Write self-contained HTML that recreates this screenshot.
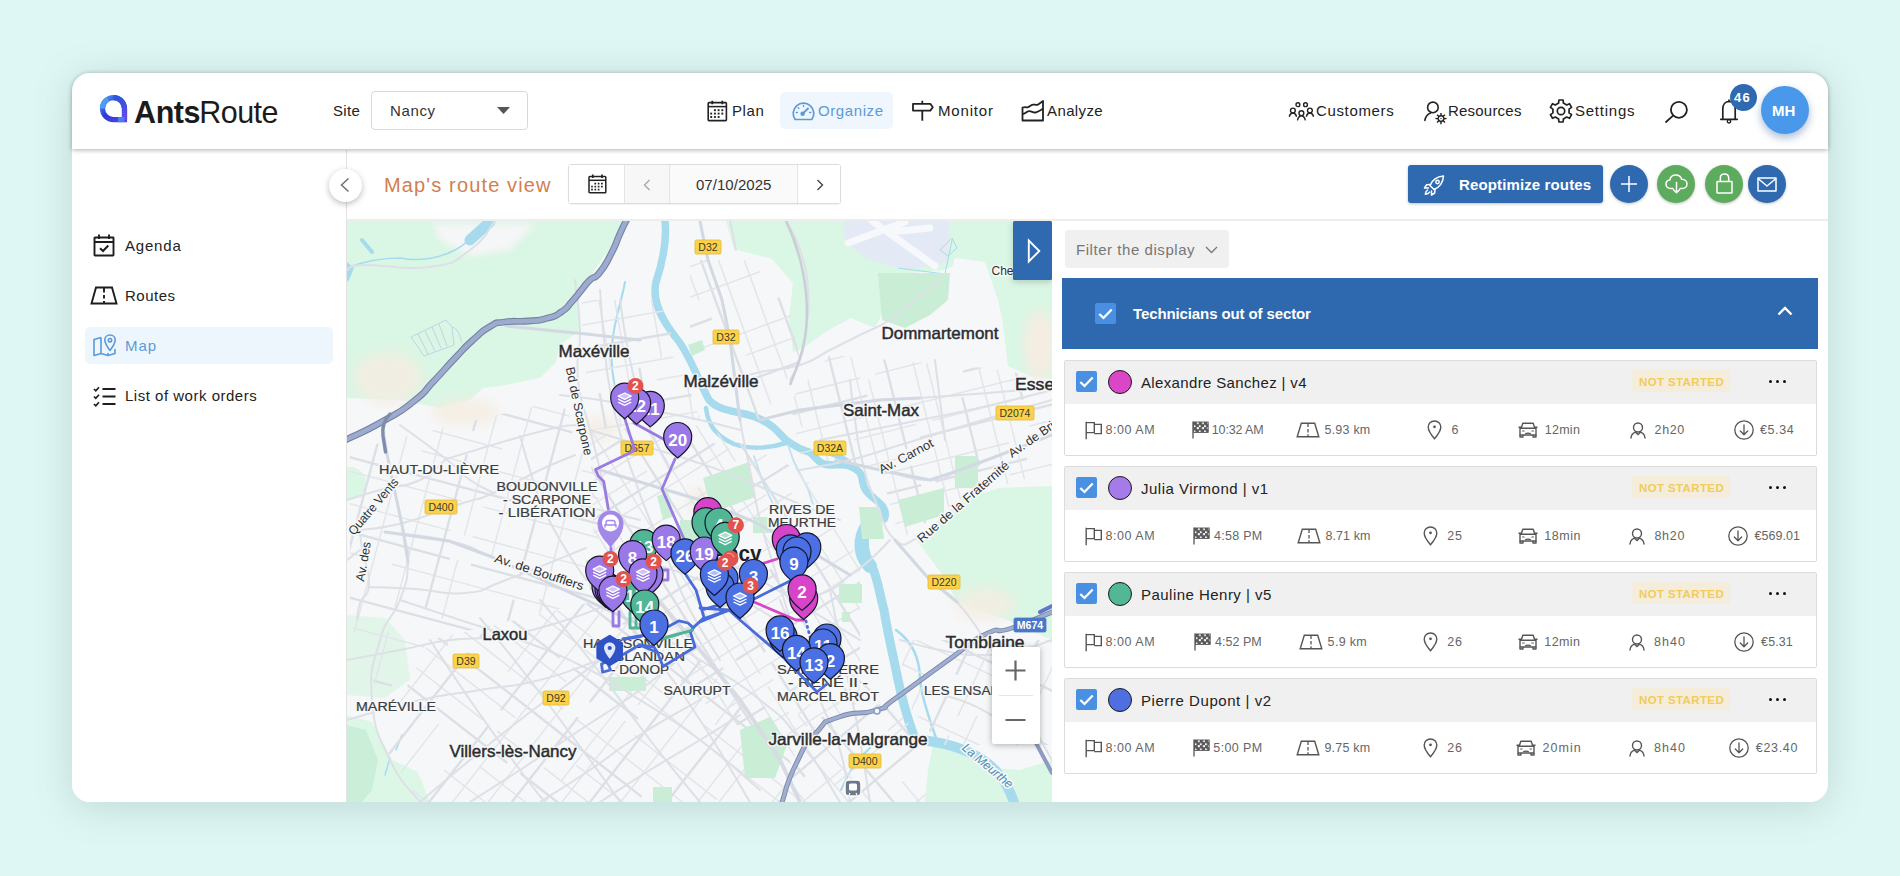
<!DOCTYPE html>
<html lang="en">
<head>
<meta charset="utf-8">
<title>AntsRoute - Map's route view</title>
<style>
*{box-sizing:border-box;margin:0;padding:0}
html,body{width:1900px;height:876px;overflow:hidden}
body{background:#dff7f4;font-family:"Liberation Sans",sans-serif;color:#222;position:relative}
.abs{position:absolute}
.t{position:absolute;white-space:nowrap;line-height:1}
#card{position:absolute;left:72px;top:73px;width:1756px;height:729px;background:#fff;border-radius:18px;box-shadow:0 5px 40px rgba(60,100,95,.2)}
#hdr{position:absolute;left:72px;top:73px;width:1756px;height:76px;background:#fff;border-radius:18px 18px 0 0;box-shadow:0 1px 5px rgba(0,0,0,.32)}
#side{position:absolute;left:72px;top:150px;width:275px;height:652px;border-right:1px solid #e2e2e2;background:#fff;border-radius:0 0 0 18px}
#subline{position:absolute;left:347px;top:219px;width:1481px;height:2px;background:#ededed}
svg{position:absolute;overflow:visible}
#map{position:absolute;left:346px;top:221px;width:706px;height:581px;overflow:hidden;background:#f6f7f8}
#map svg{left:0;top:0}
</style>
</head>
<body>
<div id="card"></div>
<div id="map"><svg width="706" height="581" viewBox="346 221 706 581" font-family="Liberation Sans, sans-serif">
<defs>
<filter id="blur6" x="-20%" y="-20%" width="140%" height="140%"><feGaussianBlur stdDeviation="6"/></filter>
<filter id="blur3" x="-20%" y="-20%" width="140%" height="140%"><feGaussianBlur stdDeviation="3"/></filter>
</defs>
<rect x="346" y="221" width="706" height="581" fill="#f6f7f8"/>
<g fill="#daf6e4">
<path d="M346 221H628L612 245L600 262L588 280L578 296L580 330L560 345L556 362L540 378L506 385L483 388L470 400L440 408L420 404L400 400L346 398Z"/>
<path d="M726 221L734 249L772 259L793 283L789 318L793 352L803 348L827 331L851 318L875 328L882 314L899 300L909 273L943 270L960 263L984 273L998 300L1005 331L1008 366L1032 376L1052 379V221Z"/>
<path d="M916 539L962 500L999 488L1052 486V640L1010 621L957 602L944 577Z"/>
<path d="M933 745L965 752L990 768L1020 770L1052 760V802H925L928 770Z"/>
<path d="M1010 600H1052V628L1012 612Z"/>
<path d="M346 615L385 618L405 640L410 680L385 698L346 695Z" fill-opacity=".75"/><path d="M346 715L372 722L392 760L418 772L430 802H346Z" fill-opacity=".9"/>
<circle cx="350" cy="483" r="16"/>
<path d="M346 725L366 730L378 760L372 790L362 802H346Z" fill="#caeed8"/>
</g>
<g fill="#f5ede2" fill-opacity=".85" filter="url(#blur6)"><ellipse cx="388" cy="378" rx="34" ry="26"/><ellipse cx="465" cy="412" rx="34" ry="13"/><ellipse cx="1035" cy="345" rx="22" ry="36"/><ellipse cx="985" cy="604" rx="30" ry="16"/><ellipse cx="600" cy="428" rx="20" ry="10"/><ellipse cx="700" cy="500" rx="14" ry="12"/></g>
<g fill="#f5f6f7" filter="url(#blur3)"><path d="M433 224H535L510 250L470 256L440 240Z"/><path d="M955 262L990 262L1005 300L1010 366L960 376L905 352L870 340L900 310L925 300Z" fill-opacity=".0"/></g>
<path d="M955 258L985 262L998 300L1008 366L1040 382L1052 384V420H820V355L803 350L827 333L851 320L875 330L890 318L920 296L948 282Z" fill="#f6f7f8"/>
<path d="M1000 300L1052 290V376L1032 376L1008 366Z" fill="#daf6e4"/>
<ellipse cx="1040" cy="345" rx="16" ry="34" fill="#f5ede2" filter="url(#blur6)"/>
<path d="M843 221H950L948 262L905 270L865 258L845 240Z" fill="#e3eaf6"/>
<g stroke="#f6f8fc" stroke-width="7" stroke-linecap="round"><path d="M848 243L905 222M872 221L935 266M890 232L930 228"/></g>
<path d="M898 268L945 274L952 240M940 250L952 238L957 248L948 256Z" fill="none" stroke="#a6dbed" stroke-width="1"/>
<g fill="none" stroke="#c3d3e6" stroke-width="1"><path d="M411 337L446 320L452 327L454 345L424 356Z"/><path d="M418 334L428 354M425 331L435 351M432 327L441 348M439 324L447 346"/><path d="M452 327C458 328 460 336 462 343"/></g>
<g fill="none" stroke="#a6dbed" stroke-linecap="round" stroke-linejoin="round">
<path d="M665 221C667 240 664 258 656 282C652 300 660 318 677 339C690 355 698 380 709 400C716 408 727 410 740 413C752 415 764 420 773 427C780 433 783 438 788 441.500C796 447 802 450 809 452C815 456 818 462 823.600 464C832 466 838 464 846 465C853 467 858 470 860.700 474C863 479 862 484 865 489C870 497 878 500 883 507C886 512 886 515 884.400 518.700" stroke-width="7.500"/>
<path d="M706 408C708 425 716 436 734 444C748 449 768 449 786 443" stroke-width="4.500"/><path d="M754 456L762 480L773 504M788 445L794 462L808 489L813 504" stroke-width="1.800" stroke="#bfe2ee"/>
<path d="M816 452C826 450 838 455 848 462" stroke-width="6"/>
<path d="M870 520C862 535 862 552 872 566C878 580 880 596 884 610C887 630 893 655 897 675C902 700 908 720 914 736" stroke-width="9"/>
<path d="M868 525C858 540 860 556 870 566" stroke-width="14"/>
<path d="M920 740C940 742 960 746 980 758C996 768 1006 780 1014 802" stroke-width="10"/>
<path d="M896 630C910 640 920 655 920 680C922 700 930 720 936 738" stroke-width="2.500"/>
<path d="M625 282C622 300 614 320 612 345C610 365 614 385 618 400" stroke-width="2"/>
<path d="M347 268C362 262 380 258 400 258C420 262 440 258 455 250C465 245 472 238 480 228" stroke-width="1.500"/>
<path d="M362 240L372 252" stroke-width="4"/>
<path d="M470 240L490 222" stroke-width="11"/>
<path d="M841 790C850 770 856 760 870 748" stroke-width="2"/>
<path d="M390 758L385 775M402 735L396 750" stroke-width="1.500"/>
</g>
<path d="M347 262L354 268L349 280L347 282Z" fill="#a6dbed"/>
<clipPath id="gA"><path d="M590 430L700 425L800 470L860 560L860 700L790 760L700 700L640 640L596 600Z"/></clipPath>
<g clip-path="url(#gA)" fill="none" stroke="#e3e5ea" stroke-width="1.5" stroke-linecap="round">
<path d="M797.7 281.6L826.9 328.3" stroke-width="2.400" stroke="#dcdfe5"/>
<path d="M826.9 328.3L891.6 431.9" stroke-width="2.400" stroke="#dcdfe5"/>
<path d="M891.6 431.9L961.1 542.9" stroke-width="2.400" stroke="#dcdfe5"/>
<path d="M961.1 542.9L1005.2 613.6" stroke-width="2.400" stroke="#dcdfe5"/>
<path d="M1005.2 613.6L1036.3 663.4" stroke-width="2.400" stroke="#dcdfe5"/>
<path d="M780.2 292.5L832.3 375.9"/>
<path d="M840.2 388.6L864.1 426.8"/>
<path d="M864.1 426.8L900.6 485.2"/>
<path d="M900.6 485.2L952.0 567.6"/>
<path d="M952.0 567.6L978.7 610.2"/>
<path d="M978.7 610.2L1018.8 674.4"/>
<path d="M766.9 300.9L814.4 376.9"/>
<path d="M860.2 450.3L897.3 509.6"/>
<path d="M897.3 509.6L922.8 550.5"/>
<path d="M930.8 563.2L998.4 671.4"/>
<path d="M998.4 671.4L1005.5 682.7"/>
<path d="M757.5 306.7L828.1 419.8" stroke-width="2.400" stroke="#dcdfe5"/>
<path d="M828.1 419.8L889.9 518.6" stroke-width="2.400" stroke="#dcdfe5"/>
<path d="M889.9 518.6L929.1 581.3" stroke-width="2.400" stroke="#dcdfe5"/>
<path d="M937.0 594.0L989.0 677.1" stroke-width="2.400" stroke="#dcdfe5"/>
<path d="M989.0 677.1L996.1 688.6" stroke-width="2.400" stroke="#dcdfe5"/>
<path d="M808.1 416.3L844.4 474.3"/>
<path d="M844.4 474.3L866.8 510.1"/>
<path d="M866.8 510.1L920.4 595.9"/>
<path d="M920.4 595.9L982.3 694.9"/>
<path d="M793.9 413.6L860.9 520.8"/>
<path d="M868.8 533.5L942.3 651.1"/>
<path d="M950.3 663.8L974.3 702.2"/>
<path d="M745.1 363.1L780.2 419.3" stroke-width="2.400" stroke="#dcdfe5"/>
<path d="M788.2 432.0L837.7 511.2" stroke-width="2.400" stroke="#dcdfe5"/>
<path d="M837.7 511.2L909.4 626.0" stroke-width="2.400" stroke="#dcdfe5"/>
<path d="M712.5 334.8L759.2 409.6"/>
<path d="M759.2 409.6L784.0 449.2"/>
<path d="M784.0 449.2L811.0 492.5"/>
<path d="M811.0 492.5L832.2 526.4"/>
<path d="M832.2 526.4L903.7 640.8"/>
<path d="M903.7 640.8L951.1 716.7"/>
<path d="M695.1 345.7L748.2 430.7"/>
<path d="M822.4 549.3L869.0 624.0"/>
<path d="M869.0 624.0L895.6 666.6"/>
<path d="M895.6 666.6L933.7 727.5"/>
<path d="M683.8 352.8L724.2 417.4" stroke-width="2.400" stroke="#dcdfe5"/>
<path d="M724.2 417.4L785.5 515.6" stroke-width="2.400" stroke="#dcdfe5"/>
<path d="M785.5 515.6L843.6 608.6" stroke-width="2.400" stroke="#dcdfe5"/>
<path d="M843.6 608.6L913.0 719.5" stroke-width="2.400" stroke="#dcdfe5"/>
<path d="M913.0 719.5L922.4 734.6" stroke-width="2.400" stroke="#dcdfe5"/>
<path d="M672.1 360.1L735.1 460.8"/>
<path d="M799.0 563.1L830.8 614.0"/>
<path d="M830.8 614.0L904.4 731.8"/>
<path d="M660.0 367.7L731.9 482.7"/>
<path d="M731.9 482.7L803.7 597.6"/>
<path d="M803.7 597.6L830.3 640.2"/>
<path d="M830.3 640.2L862.3 691.5"/>
<path d="M862.3 691.5L898.6 749.5"/>
<path d="M648.7 374.7L690.4 441.6" stroke-width="2.400" stroke="#dcdfe5"/>
<path d="M690.4 441.6L737.0 516.1" stroke-width="2.400" stroke="#dcdfe5"/>
<path d="M770.7 570.1L816.5 643.3" stroke-width="2.400" stroke="#dcdfe5"/>
<path d="M816.5 643.3L876.1 738.7" stroke-width="2.400" stroke="#dcdfe5"/>
<path d="M876.1 738.7L887.3 756.6" stroke-width="2.400" stroke="#dcdfe5"/>
<path d="M698.7 488.1L728.2 535.2"/>
<path d="M807.2 661.7L872.3 765.9"/>
<path d="M622.9 390.8L670.7 467.2"/>
<path d="M670.7 467.2L705.6 523.1"/>
<path d="M705.6 523.1L730.1 562.2"/>
<path d="M607.7 400.3L629.9 435.8" stroke-width="2.400" stroke="#dcdfe5"/>
<path d="M629.9 435.8L683.4 521.3" stroke-width="2.400" stroke="#dcdfe5"/>
<path d="M683.4 521.3L713.7 569.9" stroke-width="2.400" stroke="#dcdfe5"/>
<path d="M713.7 569.9L764.4 651.0" stroke-width="2.400" stroke="#dcdfe5"/>
<path d="M772.3 663.7L835.1 764.1" stroke-width="2.400" stroke="#dcdfe5"/>
<path d="M835.1 764.1L846.3 782.1" stroke-width="2.400" stroke="#dcdfe5"/>
<path d="M702.3 581.3L760.2 673.9"/>
<path d="M768.1 686.6L816.2 763.6"/>
<path d="M582.1 416.3L609.8 460.5"/>
<path d="M609.8 460.5L666.5 551.4"/>
<path d="M666.5 551.4L723.2 642.1"/>
<path d="M723.2 642.1L794.2 755.7"/>
<path d="M565.5 426.7L607.8 494.4" stroke-width="2.400" stroke="#dcdfe5"/>
<path d="M607.8 494.4L637.6 542.0" stroke-width="2.400" stroke="#dcdfe5"/>
<path d="M645.5 554.7L684.7 617.4" stroke-width="2.400" stroke="#dcdfe5"/>
<path d="M684.7 617.4L710.8 659.1" stroke-width="2.400" stroke="#dcdfe5"/>
<path d="M710.8 659.1L761.3 740.1" stroke-width="2.400" stroke="#dcdfe5"/>
<path d="M761.3 740.1L802.9 806.6" stroke-width="2.400" stroke="#dcdfe5"/>
<path d="M802.9 806.6L804.1 808.5" stroke-width="2.400" stroke="#dcdfe5"/>
<path d="M555.2 433.2L590.4 489.6"/>
<path d="M590.4 489.6L626.0 546.5"/>
<path d="M633.9 559.2L700.1 665.1"/>
<path d="M700.1 665.1L742.8 733.5"/>
<path d="M750.8 746.2L793.8 815.0"/>
<path d="M539.9 442.7L608.5 552.5"/>
<path d="M663.4 640.3L716.8 725.8"/>
<path d="M716.8 725.8L778.5 824.5"/>
<path d="M522.5 453.5L592.3 565.1" stroke-width="2.400" stroke="#dcdfe5"/>
<path d="M592.3 565.1L641.4 643.7" stroke-width="2.400" stroke="#dcdfe5"/>
<path d="M641.4 643.7L713.9 759.8" stroke-width="2.400" stroke="#dcdfe5"/>
<path d="M713.9 759.8L745.8 810.8" stroke-width="2.400" stroke="#dcdfe5"/>
<path d="M745.8 810.8L761.2 835.4" stroke-width="2.400" stroke="#dcdfe5"/>
<path d="M511.0 460.7L550.6 524.1"/>
<path d="M550.6 524.1L573.8 561.1"/>
<path d="M573.8 561.1L622.2 638.7"/>
<path d="M664.9 707.0L720.9 796.6"/>
<path d="M728.9 809.4L749.6 842.6"/>
<path d="M494.2 471.3L559.5 575.8"/>
<path d="M559.5 575.8L602.1 644.0"/>
<path d="M602.1 644.0L667.7 748.9"/>
<path d="M667.7 748.9L711.7 819.4"/>
<path d="M719.7 832.1L732.8 853.1"/>
<path d="M478.4 481.2L502.0 518.9" stroke-width="2.400" stroke="#dcdfe5"/>
<path d="M502.0 518.9L546.8 590.6" stroke-width="2.400" stroke="#dcdfe5"/>
<path d="M546.8 590.6L619.5 707.0" stroke-width="2.400" stroke="#dcdfe5"/>
<path d="M642.5 743.9L682.6 808.0" stroke-width="2.400" stroke="#dcdfe5"/>
<path d="M690.6 820.8L716.2 861.8" stroke-width="2.400" stroke="#dcdfe5"/>
<path d="M716.2 861.8L717.0 863.0" stroke-width="2.400" stroke="#dcdfe5"/>
<path d="M470.5 486.1L512.9 553.9"/>
<path d="M512.9 553.9L549.9 613.2"/>
<path d="M549.9 613.2L602.2 696.8"/>
<path d="M602.2 696.8L658.2 786.5"/>
<path d="M666.2 799.2L709.1 867.9"/>
<path d="M455.4 495.5L510.7 583.9"/>
<path d="M578.8 692.8L648.2 803.9"/>
<path d="M648.2 803.9L694.0 877.3"/>
<path d="M512.0 600.1L577.5 704.9" stroke-width="2.400" stroke="#dcdfe5"/>
<path d="M577.5 704.9L631.9 791.9" stroke-width="2.400" stroke="#dcdfe5"/>
<path d="M639.8 804.7L675.0 860.9" stroke-width="2.400" stroke="#dcdfe5"/>
<path d="M675.0 860.9L687.7 881.3" stroke-width="2.400" stroke="#dcdfe5"/>
<path d="M435.0 508.2L495.2 604.6"/>
<path d="M495.2 604.6L561.3 710.3"/>
<path d="M561.3 710.3L594.7 763.8"/>
<path d="M602.7 776.5L650.0 852.3"/>
<path d="M658.0 865.1L673.6 890.1"/>
<path d="M417.6 519.1L442.9 559.6"/>
<path d="M442.9 559.6L498.7 648.8"/>
<path d="M498.7 648.8L520.5 683.7"/>
<path d="M520.5 683.7L593.2 800.1"/>
<path d="M593.2 800.1L650.2 891.4"/>
<path d="M650.2 891.4L656.2 900.9"/>
<path d="M1035.0 663.8L974.6 701.5" stroke-width="2.400" stroke="#dcdfe5"/>
<path d="M960.2 710.5L924.8 732.6" stroke-width="2.400" stroke="#dcdfe5"/>
<path d="M910.4 741.6L792.2 815.5" stroke-width="2.400" stroke="#dcdfe5"/>
<path d="M792.2 815.5L751.9 840.6" stroke-width="2.400" stroke="#dcdfe5"/>
<path d="M751.9 840.6L653.2 902.4" stroke-width="2.400" stroke="#dcdfe5"/>
<path d="M955.5 687.8L888.2 729.9"/>
<path d="M873.8 738.9L782.1 796.2"/>
<path d="M782.1 796.2L712.8 839.5"/>
<path d="M712.8 839.5L641.7 884.0"/>
<path d="M1015.5 632.6L903.0 702.9"/>
<path d="M903.0 702.9L847.6 737.5"/>
<path d="M833.2 746.5L714.6 820.6"/>
<path d="M714.6 820.6L633.7 871.2"/>
<path d="M1007.5 619.7L917.4 676.0" stroke-width="2.400" stroke="#dcdfe5"/>
<path d="M917.4 676.0L862.4 710.4" stroke-width="2.400" stroke="#dcdfe5"/>
<path d="M862.4 710.4L812.3 741.7" stroke-width="2.400" stroke="#dcdfe5"/>
<path d="M997.4 603.5L901.3 663.6"/>
<path d="M901.3 663.6L812.8 718.9"/>
<path d="M812.8 718.9L701.5 788.4"/>
<path d="M701.5 788.4L627.5 834.6"/>
<path d="M627.5 834.6L615.5 842.2"/>
<path d="M987.7 588.0L912.8 634.8"/>
<path d="M912.8 634.8L864.7 664.9"/>
<path d="M788.3 712.6L715.9 757.8"/>
<path d="M701.5 766.8L631.4 810.7"/>
<path d="M631.4 810.7L605.8 826.6"/>
<path d="M978.6 573.5L876.0 637.6" stroke-width="2.400" stroke="#dcdfe5"/>
<path d="M876.0 637.6L778.5 698.5" stroke-width="2.400" stroke="#dcdfe5"/>
<path d="M764.1 707.5L666.9 768.2" stroke-width="2.400" stroke="#dcdfe5"/>
<path d="M666.9 768.2L604.3 807.3" stroke-width="2.400" stroke="#dcdfe5"/>
<path d="M604.3 807.3L596.7 812.1" stroke-width="2.400" stroke="#dcdfe5"/>
<path d="M968.6 557.5L902.1 599.1"/>
<path d="M772.8 679.9L728.1 707.8"/>
<path d="M713.7 716.8L597.7 789.3"/>
<path d="M960.4 544.4L917.2 571.3"/>
<path d="M917.2 571.3L803.5 642.4"/>
<path d="M789.0 651.4L747.9 677.1"/>
<path d="M747.9 677.1L647.6 739.8"/>
<path d="M647.6 739.8L578.5 783.0"/>
<path d="M949.4 526.8L878.4 571.1" stroke-width="2.400" stroke="#dcdfe5"/>
<path d="M878.4 571.1L838.5 596.1" stroke-width="2.400" stroke="#dcdfe5"/>
<path d="M838.5 596.1L771.6 637.8" stroke-width="2.400" stroke="#dcdfe5"/>
<path d="M771.6 637.8L736.8 659.6" stroke-width="2.400" stroke="#dcdfe5"/>
<path d="M722.4 668.6L664.9 704.5" stroke-width="2.400" stroke="#dcdfe5"/>
<path d="M664.9 704.5L590.6 750.9" stroke-width="2.400" stroke="#dcdfe5"/>
<path d="M590.6 750.9L567.5 765.4" stroke-width="2.400" stroke="#dcdfe5"/>
<path d="M943.5 517.3L834.5 585.4"/>
<path d="M834.5 585.4L778.8 620.2"/>
<path d="M778.8 620.2L725.6 653.4"/>
<path d="M725.6 653.4L630.8 712.7"/>
<path d="M616.3 721.7L565.6 753.4"/>
<path d="M933.1 500.8L859.8 546.6"/>
<path d="M859.8 546.6L816.6 573.6"/>
<path d="M816.6 573.6L706.7 642.3"/>
<path d="M706.7 642.3L592.3 713.8"/>
<path d="M577.9 722.8L551.3 739.4"/>
<path d="M921.9 482.8L872.4 513.8" stroke-width="2.400" stroke="#dcdfe5"/>
<path d="M776.3 573.8L714.5 612.4" stroke-width="2.400" stroke="#dcdfe5"/>
<path d="M700.1 621.4L663.5 644.3" stroke-width="2.400" stroke="#dcdfe5"/>
<path d="M917.2 475.3L859.6 511.3"/>
<path d="M859.6 511.3L778.1 562.2"/>
<path d="M685.1 620.4L643.7 646.2"/>
<path d="M578.2 687.1L535.4 713.9"/>
<path d="M908.1 460.6L805.3 524.8"/>
<path d="M805.3 524.8L739.5 565.9"/>
<path d="M739.5 565.9L683.8 600.7"/>
<path d="M683.8 600.7L619.1 641.2"/>
<path d="M619.1 641.2L562.9 676.3"/>
<path d="M562.9 676.3L526.2 699.2"/>
<path d="M697.6 577.6L652.4 605.9" stroke-width="2.400" stroke="#dcdfe5"/>
<path d="M652.4 605.9L550.4 669.6" stroke-width="2.400" stroke="#dcdfe5"/>
<path d="M550.4 669.6L519.7 688.8" stroke-width="2.400" stroke="#dcdfe5"/>
<path d="M890.0 431.7L805.6 484.5"/>
<path d="M791.1 493.5L693.4 554.6"/>
<path d="M693.4 554.6L604.4 610.2"/>
<path d="M604.4 610.2L556.8 639.9"/>
<path d="M556.8 639.9L508.2 670.3"/>
<path d="M765.8 495.0L712.1 528.6"/>
<path d="M614.7 589.5L514.6 652.0"/>
<path d="M514.6 652.0L501.7 660.0"/>
<path d="M876.3 409.9L821.6 444.1" stroke-width="2.400" stroke="#dcdfe5"/>
<path d="M821.6 444.1L760.0 482.6" stroke-width="2.400" stroke="#dcdfe5"/>
<path d="M760.0 482.6L683.1 530.6" stroke-width="2.400" stroke="#dcdfe5"/>
<path d="M865.7 392.7L827.5 416.6"/>
<path d="M827.5 416.6L714.7 487.1"/>
<path d="M714.7 487.1L642.6 532.1"/>
<path d="M642.6 532.1L599.7 558.9"/>
<path d="M599.7 558.9L547.4 591.6"/>
<path d="M509.7 615.2L483.8 631.4"/>
<path d="M852.5 371.7L783.9 414.6"/>
<path d="M783.9 414.6L743.4 439.9"/>
<path d="M728.9 448.9L648.5 499.2"/>
<path d="M648.5 499.2L547.1 562.5"/>
<path d="M547.1 562.5L470.7 610.3"/>
<path d="M846.1 361.5L728.4 435.1" stroke-width="2.400" stroke="#dcdfe5"/>
<path d="M714.0 444.1L599.2 515.8" stroke-width="2.400" stroke="#dcdfe5"/>
<path d="M599.2 515.8L530.2 559.0" stroke-width="2.400" stroke="#dcdfe5"/>
<path d="M530.2 559.0L464.3 600.1" stroke-width="2.400" stroke="#dcdfe5"/>
<path d="M839.3 350.6L728.9 419.6"/>
<path d="M646.1 471.3L546.7 533.5"/>
<path d="M546.7 533.5L466.0 583.9"/>
<path d="M829.0 334.0L763.6 374.9"/>
<path d="M763.6 374.9L700.2 414.5"/>
<path d="M700.2 414.5L587.8 484.8"/>
<path d="M573.3 493.8L475.5 554.9"/>
<path d="M765.6 350.2L724.3 376.0" stroke-width="2.400" stroke="#dcdfe5"/>
<path d="M621.7 440.1L535.6 493.9" stroke-width="2.400" stroke="#dcdfe5"/>
<path d="M521.2 502.9L471.8 533.8" stroke-width="2.400" stroke="#dcdfe5"/>
<path d="M457.4 542.8L436.6 555.8" stroke-width="2.400" stroke="#dcdfe5"/>
<path d="M607.5 434.2L517.0 490.8"/>
<path d="M502.5 499.8L429.9 545.2"/>
<path d="M801.7 290.4L746.6 324.8"/>
<path d="M746.6 324.8L674.8 369.6"/>
<path d="M626.2 400.0L572.3 433.7"/>
<path d="M438.6 517.2L419.8 529.0"/>
</g>
<clipPath id="gB"><path d="M430 640L600 600L700 660L790 760L800 802L420 802L380 740Z"/></clipPath>
<g clip-path="url(#gB)" fill="none" stroke="#e3e5ea" stroke-width="1.5" stroke-linecap="round">
<path d="M546.3 362.1L617.6 417.8" stroke-width="2.400" stroke="#dcdfe5"/>
<path d="M617.6 417.8L699.3 481.6" stroke-width="2.400" stroke="#dcdfe5"/>
<path d="M699.3 481.6L792.1 554.1" stroke-width="2.400" stroke="#dcdfe5"/>
<path d="M882.9 625.1L916.4 651.3" stroke-width="2.400" stroke="#dcdfe5"/>
<path d="M535.4 376.1L629.6 449.7"/>
<path d="M629.6 449.7L666.3 478.3"/>
<path d="M710.3 512.7L813.1 593.1"/>
<path d="M884.2 648.6L918.4 675.4"/>
<path d="M528.9 384.4L574.8 420.3"/>
<path d="M659.9 486.8L753.8 560.2"/>
<path d="M753.8 560.2L835.5 624.0"/>
<path d="M850.4 635.7L911.9 683.7"/>
<path d="M515.3 401.9L614.3 479.2" stroke-width="2.400" stroke="#dcdfe5"/>
<path d="M666.7 520.1L726.6 567.0" stroke-width="2.400" stroke="#dcdfe5"/>
<path d="M741.6 578.7L791.2 617.4" stroke-width="2.400" stroke="#dcdfe5"/>
<path d="M791.2 617.4L846.1 660.3" stroke-width="2.400" stroke="#dcdfe5"/>
<path d="M500.9 420.4L549.8 458.6"/>
<path d="M564.8 470.3L629.2 520.7"/>
<path d="M629.2 520.7L671.2 553.4"/>
<path d="M671.2 553.4L704.5 579.4"/>
<path d="M704.5 579.4L759.9 622.7"/>
<path d="M759.9 622.7L824.0 672.8"/>
<path d="M824.0 672.8L871.6 710.0"/>
<path d="M495.0 427.9L589.6 501.9"/>
<path d="M604.6 513.6L643.7 544.1"/>
<path d="M643.7 544.1L706.9 593.5"/>
<path d="M742.8 621.6L821.2 682.8"/>
<path d="M485.2 440.4L531.4 476.5" stroke-width="2.400" stroke="#dcdfe5"/>
<path d="M531.4 476.5L563.8 501.8" stroke-width="2.400" stroke="#dcdfe5"/>
<path d="M563.8 501.8L606.6 535.2" stroke-width="2.400" stroke="#dcdfe5"/>
<path d="M621.6 546.9L717.2 621.6" stroke-width="2.400" stroke="#dcdfe5"/>
<path d="M717.2 621.6L753.7 650.2" stroke-width="2.400" stroke="#dcdfe5"/>
<path d="M768.7 661.9L856.6 730.5" stroke-width="2.400" stroke="#dcdfe5"/>
<path d="M469.3 460.7L559.3 531.0"/>
<path d="M559.3 531.0L669.4 617.0"/>
<path d="M710.6 649.2L798.2 717.6"/>
<path d="M455.7 478.1L557.7 557.8"/>
<path d="M602.6 592.9L708.6 675.7"/>
<path d="M708.6 675.7L755.2 712.1"/>
<path d="M831.6 771.8L838.7 777.4"/>
<path d="M444.7 492.2L533.3 561.4" stroke-width="2.400" stroke="#dcdfe5"/>
<path d="M533.3 561.4L627.1 634.7" stroke-width="2.400" stroke="#dcdfe5"/>
<path d="M627.1 634.7L703.1 694.1" stroke-width="2.400" stroke="#dcdfe5"/>
<path d="M703.1 694.1L736.8 720.4" stroke-width="2.400" stroke="#dcdfe5"/>
<path d="M736.8 720.4L795.5 766.2" stroke-width="2.400" stroke="#dcdfe5"/>
<path d="M795.5 766.2L827.7 791.4" stroke-width="2.400" stroke="#dcdfe5"/>
<path d="M429.9 511.1L466.7 539.8"/>
<path d="M513.9 576.7L614.7 655.5"/>
<path d="M629.7 667.2L669.7 698.4"/>
<path d="M703.8 725.1L800.4 800.5"/>
<path d="M800.4 800.5L813.0 810.4"/>
<path d="M421.4 522.1L473.5 562.8"/>
<path d="M473.5 562.8L508.8 590.4"/>
<path d="M508.8 590.4L601.0 662.4"/>
<path d="M615.9 674.1L714.5 751.1"/>
<path d="M714.5 751.1L804.4 821.3"/>
<path d="M408.0 539.2L482.0 596.9" stroke-width="2.400" stroke="#dcdfe5"/>
<path d="M482.0 596.9L558.7 656.9" stroke-width="2.400" stroke="#dcdfe5"/>
<path d="M573.7 668.6L605.3 693.3" stroke-width="2.400" stroke="#dcdfe5"/>
<path d="M605.3 693.3L637.2 718.2" stroke-width="2.400" stroke="#dcdfe5"/>
<path d="M494.6 625.8L565.4 681.1"/>
<path d="M635.5 735.9L716.5 799.2"/>
<path d="M384.4 569.4L445.2 616.9"/>
<path d="M460.2 628.6L562.7 708.7"/>
<path d="M577.7 720.4L686.7 805.5"/>
<path d="M701.6 817.2L743.1 849.7"/>
<path d="M743.1 849.7L767.4 868.6"/>
<path d="M371.6 585.8L446.8 644.5" stroke-width="2.400" stroke="#dcdfe5"/>
<path d="M461.8 656.2L527.9 707.8" stroke-width="2.400" stroke="#dcdfe5"/>
<path d="M527.9 707.8L569.3 740.2" stroke-width="2.400" stroke="#dcdfe5"/>
<path d="M569.3 740.2L640.8 796.1" stroke-width="2.400" stroke="#dcdfe5"/>
<path d="M729.4 865.3L754.6 885.0" stroke-width="2.400" stroke="#dcdfe5"/>
<path d="M362.1 598.0L470.4 682.7"/>
<path d="M470.4 682.7L514.9 717.4"/>
<path d="M576.7 765.7L666.0 835.5"/>
<path d="M706.2 866.8L745.1 897.2"/>
<path d="M348.8 615.0L414.7 666.5"/>
<path d="M414.7 666.5L482.7 719.7"/>
<path d="M497.7 731.4L529.6 756.4"/>
<path d="M544.6 768.1L631.4 835.9"/>
<path d="M646.3 847.5L731.8 914.3"/>
<path d="M337.1 630.0L404.3 682.6" stroke-width="2.400" stroke="#dcdfe5"/>
<path d="M404.3 682.6L506.4 762.3" stroke-width="2.400" stroke="#dcdfe5"/>
<path d="M521.3 774.0L609.1 842.5" stroke-width="2.400" stroke="#dcdfe5"/>
<path d="M609.1 842.5L707.5 919.4" stroke-width="2.400" stroke="#dcdfe5"/>
<path d="M707.5 919.4L720.1 929.3" stroke-width="2.400" stroke="#dcdfe5"/>
<path d="M357.2 670.9L391.7 697.9"/>
<path d="M479.7 766.6L552.1 823.2"/>
<path d="M567.1 834.9L641.2 892.9"/>
<path d="M309.7 665.0L357.8 702.6"/>
<path d="M444.7 770.6L526.5 834.4"/>
<path d="M541.5 846.1L604.5 895.4"/>
<path d="M619.5 907.1L692.7 964.3"/>
<path d="M302.2 674.7L357.6 718.0" stroke-width="2.400" stroke="#dcdfe5"/>
<path d="M482.5 815.5L530.7 853.2" stroke-width="2.400" stroke="#dcdfe5"/>
<path d="M530.7 853.2L626.0 927.7" stroke-width="2.400" stroke="#dcdfe5"/>
<path d="M641.0 939.3L685.2 973.9" stroke-width="2.400" stroke="#dcdfe5"/>
<path d="M398.9 779.7L508.9 865.7"/>
<path d="M508.9 865.7L601.9 938.3"/>
<path d="M601.9 938.3L654.5 979.4"/>
<path d="M654.5 979.4L670.9 992.2"/>
<path d="M278.0 705.6L331.7 747.5"/>
<path d="M331.7 747.5L388.4 791.9"/>
<path d="M388.4 791.9L471.9 857.1"/>
<path d="M471.9 857.1L570.8 934.3"/>
<path d="M570.8 934.3L661.0 1004.8"/>
<path d="M301.9 741.9L353.1 781.9" stroke-width="2.400" stroke="#dcdfe5"/>
<path d="M353.1 781.9L451.9 859.1" stroke-width="2.400" stroke="#dcdfe5"/>
<path d="M466.9 870.8L525.7 916.8" stroke-width="2.400" stroke="#dcdfe5"/>
<path d="M540.7 928.5L634.6 1001.8" stroke-width="2.400" stroke="#dcdfe5"/>
<path d="M255.1 734.9L328.4 792.2"/>
<path d="M343.4 803.9L427.8 869.9"/>
<path d="M427.8 869.9L480.2 910.8"/>
<path d="M480.2 910.8L549.0 964.6"/>
<path d="M564.0 976.3L632.3 1029.6"/>
<path d="M933.9 661.3L872.4 740.1" stroke-width="2.400" stroke="#dcdfe5"/>
<path d="M872.4 740.1L796.0 837.8" stroke-width="2.400" stroke="#dcdfe5"/>
<path d="M666.6 1003.4L634.7 1044.3" stroke-width="2.400" stroke="#dcdfe5"/>
<path d="M851.5 741.1L795.5 812.9"/>
<path d="M795.5 812.9L768.7 847.1"/>
<path d="M723.3 905.3L677.6 963.7"/>
<path d="M677.6 963.7L635.5 1017.6"/>
<path d="M856.7 694.1L772.1 802.5"/>
<path d="M772.1 802.5L727.1 860.0"/>
<path d="M694.6 901.6L621.7 994.9"/>
<path d="M608.8 1011.5L602.7 1019.3"/>
<path d="M891.6 628.2L816.3 724.5" stroke-width="2.400" stroke="#dcdfe5"/>
<path d="M730.2 834.7L667.6 914.9" stroke-width="2.400" stroke="#dcdfe5"/>
<path d="M667.6 914.9L629.9 963.1" stroke-width="2.400" stroke="#dcdfe5"/>
<path d="M617.0 979.7L592.3 1011.2" stroke-width="2.400" stroke="#dcdfe5"/>
<path d="M790.6 710.4L731.4 786.2"/>
<path d="M731.4 786.2L695.4 832.3"/>
<path d="M695.4 832.3L644.2 897.8"/>
<path d="M644.2 897.8L588.9 968.5"/>
<path d="M588.9 968.5L569.5 993.4"/>
<path d="M855.6 600.1L807.1 662.1"/>
<path d="M807.1 662.1L753.2 731.1"/>
<path d="M753.2 731.1L723.5 769.1"/>
<path d="M723.5 769.1L660.2 850.1"/>
<path d="M660.2 850.1L593.5 935.5"/>
<path d="M593.5 935.5L556.3 983.1"/>
<path d="M836.3 585.1L796.8 635.7" stroke-width="2.400" stroke="#dcdfe5"/>
<path d="M796.8 635.7L715.4 739.9" stroke-width="2.400" stroke="#dcdfe5"/>
<path d="M715.4 739.9L645.8 828.9" stroke-width="2.400" stroke="#dcdfe5"/>
<path d="M579.9 913.3L537.1 968.1" stroke-width="2.400" stroke="#dcdfe5"/>
<path d="M764.2 662.0L715.6 724.2"/>
<path d="M575.0 904.2L529.6 962.2"/>
<path d="M807.7 562.7L744.3 643.8"/>
<path d="M731.4 660.4L658.8 753.2"/>
<path d="M658.8 753.2L585.9 846.6"/>
<path d="M585.9 846.6L544.0 900.1"/>
<path d="M544.0 900.1L508.5 945.7"/>
<path d="M788.6 547.8L745.0 603.6" stroke-width="2.400" stroke="#dcdfe5"/>
<path d="M745.0 603.6L697.2 664.8" stroke-width="2.400" stroke="#dcdfe5"/>
<path d="M697.2 664.8L622.8 760.0" stroke-width="2.400" stroke="#dcdfe5"/>
<path d="M622.8 760.0L578.4 816.8" stroke-width="2.400" stroke="#dcdfe5"/>
<path d="M517.7 894.6L489.4 930.8" stroke-width="2.400" stroke="#dcdfe5"/>
<path d="M771.3 534.2L697.0 629.3"/>
<path d="M684.0 645.9L638.1 704.7"/>
<path d="M625.1 721.3L551.4 815.6"/>
<path d="M551.4 815.6L507.7 871.6"/>
<path d="M494.8 888.1L472.0 917.2"/>
<path d="M760.6 525.9L712.3 587.8"/>
<path d="M712.3 587.8L640.1 680.1"/>
<path d="M640.1 680.1L561.0 781.4"/>
<path d="M548.1 798.0L492.3 869.4"/>
<path d="M492.3 869.4L461.4 908.9"/>
<path d="M740.1 509.9L690.7 573.1" stroke-width="2.400" stroke="#dcdfe5"/>
<path d="M638.0 640.6L590.3 701.6" stroke-width="2.400" stroke="#dcdfe5"/>
<path d="M577.4 718.1L504.3 811.7" stroke-width="2.400" stroke="#dcdfe5"/>
<path d="M504.3 811.7L458.4 870.4" stroke-width="2.400" stroke="#dcdfe5"/>
<path d="M458.4 870.4L440.9 892.9" stroke-width="2.400" stroke="#dcdfe5"/>
<path d="M725.4 498.4L643.8 602.8"/>
<path d="M643.8 602.8L560.9 708.9"/>
<path d="M560.9 708.9L520.6 760.5"/>
<path d="M520.6 760.5L434.8 870.4"/>
<path d="M434.8 870.4L426.2 881.4"/>
<path d="M610.7 599.7L529.3 703.9"/>
<path d="M529.3 703.9L488.8 755.7"/>
<path d="M488.8 755.7L405.3 862.6"/>
<path d="M688.7 469.7L641.2 530.4" stroke-width="2.400" stroke="#dcdfe5"/>
<path d="M606.0 575.5L577.7 611.7" stroke-width="2.400" stroke="#dcdfe5"/>
<path d="M577.7 611.7L501.5 709.2" stroke-width="2.400" stroke="#dcdfe5"/>
<path d="M488.6 725.8L460.6 761.7" stroke-width="2.400" stroke="#dcdfe5"/>
<path d="M460.6 761.7L389.4 852.7" stroke-width="2.400" stroke="#dcdfe5"/>
<path d="M674.4 458.6L609.6 541.5"/>
<path d="M609.6 541.5L569.2 593.3"/>
<path d="M556.2 609.8L508.2 671.3"/>
<path d="M414.4 791.4L375.2 841.6"/>
<path d="M656.8 444.8L627.4 482.4"/>
<path d="M627.4 482.4L548.0 584.0"/>
<path d="M438.6 724.1L362.1 822.0"/>
<path d="M640.5 432.1L601.5 482.0" stroke-width="2.400" stroke="#dcdfe5"/>
<path d="M601.5 482.0L568.1 524.8" stroke-width="2.400" stroke="#dcdfe5"/>
<path d="M568.1 524.8L532.4 570.5" stroke-width="2.400" stroke="#dcdfe5"/>
<path d="M532.4 570.5L480.7 636.6" stroke-width="2.400" stroke="#dcdfe5"/>
<path d="M467.8 653.2L417.8 717.1" stroke-width="2.400" stroke="#dcdfe5"/>
<path d="M417.8 717.1L358.0 793.7" stroke-width="2.400" stroke="#dcdfe5"/>
<path d="M358.0 793.7L341.3 815.1" stroke-width="2.400" stroke="#dcdfe5"/>
<path d="M622.3 417.8L537.4 526.5"/>
<path d="M478.3 602.1L437.8 653.9"/>
<path d="M437.8 653.9L386.6 719.5"/>
<path d="M386.6 719.5L323.0 800.8"/>
<path d="M529.7 501.9L444.8 610.5"/>
<path d="M444.8 610.5L388.7 682.3"/>
<path d="M388.7 682.3L352.7 728.4"/>
<path d="M339.7 745.0L306.3 787.8"/>
<path d="M583.1 387.2L544.2 436.9" stroke-width="2.400" stroke="#dcdfe5"/>
<path d="M455.7 550.2L384.2 641.8" stroke-width="2.400" stroke="#dcdfe5"/>
<path d="M384.2 641.8L321.8 721.5" stroke-width="2.400" stroke="#dcdfe5"/>
<path d="M321.8 721.5L283.8 770.2" stroke-width="2.400" stroke="#dcdfe5"/>
<path d="M430.1 545.1L399.9 583.7"/>
<path d="M387.0 600.3L354.1 642.3"/>
<path d="M318.1 688.5L291.2 722.9"/>
<path d="M401.4 549.3L358.9 603.8"/>
<path d="M345.9 620.3L293.8 687.0"/>
<path d="M267.9 720.2L249.7 743.5"/>
</g>
<clipPath id="gD"><path d="M350 450L560 400L600 470L596 600L430 640L380 700L350 620Z"/></clipPath>
<g clip-path="url(#gD)" fill="none" stroke="#e3e5ea" stroke-width="1.5" stroke-linecap="round">
<path d="M328.9 302.3L370.4 313.4" stroke-width="2.400" stroke="#dcdfe5"/>
<path d="M457.5 336.8L546.6 360.6" stroke-width="2.400" stroke="#dcdfe5"/>
<path d="M546.6 360.6L619.1 380.1" stroke-width="2.400" stroke="#dcdfe5"/>
<path d="M619.1 380.1L662.1 391.6" stroke-width="2.400" stroke="#dcdfe5"/>
<path d="M685.3 397.8L725.4 408.5" stroke-width="2.400" stroke="#dcdfe5"/>
<path d="M324.8 317.3L376.7 331.2"/>
<path d="M376.7 331.2L429.6 345.4"/>
<path d="M530.4 372.4L636.1 400.7"/>
<path d="M713.0 421.3L721.4 423.6"/>
<path d="M527.0 404.8L597.1 423.6"/>
<path d="M597.1 423.6L659.8 440.4"/>
<path d="M659.8 440.4L713.0 454.7"/>
<path d="M312.6 362.9L415.9 390.6" stroke-width="2.400" stroke="#dcdfe5"/>
<path d="M439.1 396.8L571.4 432.2" stroke-width="2.400" stroke="#dcdfe5"/>
<path d="M694.4 465.2L709.2 469.2" stroke-width="2.400" stroke="#dcdfe5"/>
<path d="M403.1 422.5L501.8 449.0"/>
<path d="M582.3 470.5L631.8 483.8"/>
<path d="M631.8 483.8L682.1 497.3"/>
<path d="M682.1 497.3L700.3 502.2"/>
<path d="M422.1 451.0L487.2 468.5"/>
<path d="M487.2 468.5L606.9 500.6"/>
<path d="M606.9 500.6L694.5 524.0"/>
<path d="M291.6 441.5L389.4 467.8" stroke-width="2.400" stroke="#dcdfe5"/>
<path d="M389.4 467.8L431.0 478.9" stroke-width="2.400" stroke="#dcdfe5"/>
<path d="M431.0 478.9L519.2 502.5" stroke-width="2.400" stroke="#dcdfe5"/>
<path d="M542.3 508.7L582.1 519.4" stroke-width="2.400" stroke="#dcdfe5"/>
<path d="M582.1 519.4L652.1 538.1" stroke-width="2.400" stroke="#dcdfe5"/>
<path d="M288.1 454.6L379.9 479.2"/>
<path d="M379.9 479.2L461.1 500.9"/>
<path d="M484.3 507.1L603.5 539.1"/>
<path d="M279.9 485.0L332.1 499.0"/>
<path d="M332.1 499.0L450.1 530.6"/>
<path d="M473.3 536.8L537.9 554.1"/>
<path d="M537.9 554.1L616.4 575.1"/>
<path d="M639.6 581.3L676.5 591.2"/>
<path d="M325.9 525.6L448.9 558.6" stroke-width="2.400" stroke="#dcdfe5"/>
<path d="M472.1 564.8L593.0 597.2" stroke-width="2.400" stroke="#dcdfe5"/>
<path d="M593.0 597.2L669.4 617.7" stroke-width="2.400" stroke="#dcdfe5"/>
<path d="M267.6 530.8L368.9 558.0"/>
<path d="M392.1 564.2L467.5 584.4"/>
<path d="M467.5 584.4L583.7 615.5"/>
<path d="M606.9 621.7L664.2 637.1"/>
<path d="M513.1 623.2L554.2 634.2"/>
<path d="M577.4 640.4L645.0 658.5"/>
<path d="M256.4 572.6L352.5 598.4" stroke-width="2.400" stroke="#dcdfe5"/>
<path d="M352.5 598.4L456.5 626.2" stroke-width="2.400" stroke="#dcdfe5"/>
<path d="M456.5 626.2L534.7 647.2" stroke-width="2.400" stroke="#dcdfe5"/>
<path d="M249.1 600.1L374.6 633.7"/>
<path d="M374.6 633.7L429.7 648.5"/>
<path d="M429.7 648.5L548.1 680.2"/>
<path d="M548.1 680.2L645.6 706.4"/>
<path d="M241.1 629.8L365.5 663.1"/>
<path d="M454.8 687.1L542.2 710.5"/>
<path d="M542.2 710.5L586.7 722.4"/>
<path d="M237.3 644.2L276.2 654.6" stroke-width="2.400" stroke="#dcdfe5"/>
<path d="M276.2 654.6L403.4 688.7" stroke-width="2.400" stroke="#dcdfe5"/>
<path d="M403.4 688.7L498.6 714.2" stroke-width="2.400" stroke="#dcdfe5"/>
<path d="M498.6 714.2L554.2 729.1" stroke-width="2.400" stroke="#dcdfe5"/>
<path d="M229.4 673.4L279.8 686.9"/>
<path d="M279.8 686.9L321.3 698.0"/>
<path d="M344.4 704.2L462.6 735.9"/>
<path d="M462.6 735.9L564.0 763.0"/>
<path d="M564.0 763.0L616.6 777.1"/>
<path d="M616.6 777.1L626.0 779.6"/>
<path d="M720.8 403.4L708.8 448.1" stroke-width="2.400" stroke="#dcdfe5"/>
<path d="M702.1 473.2L691.2 513.7" stroke-width="2.400" stroke="#dcdfe5"/>
<path d="M652.3 658.9L640.5 702.8" stroke-width="2.400" stroke="#dcdfe5"/>
<path d="M701.6 398.2L666.4 529.6"/>
<path d="M666.4 529.6L649.7 591.7"/>
<path d="M649.7 591.7L628.7 670.3"/>
<path d="M611.0 736.2L596.2 791.6"/>
<path d="M681.3 392.8L657.1 483.0"/>
<path d="M616.4 634.7L584.7 753.1"/>
<path d="M584.7 753.1L575.0 789.3"/>
<path d="M659.5 386.9L631.9 489.7" stroke-width="2.400" stroke="#dcdfe5"/>
<path d="M631.9 489.7L615.3 551.7" stroke-width="2.400" stroke="#dcdfe5"/>
<path d="M598.0 616.4L573.3 708.7" stroke-width="2.400" stroke="#dcdfe5"/>
<path d="M573.3 708.7L558.8 762.7" stroke-width="2.400" stroke="#dcdfe5"/>
<path d="M607.8 436.0L591.6 496.6"/>
<path d="M550.1 651.4L524.5 746.8"/>
<path d="M524.5 746.8L517.3 773.8"/>
<path d="M604.1 372.1L580.5 460.3"/>
<path d="M580.5 460.3L551.1 570.0"/>
<path d="M551.1 570.0L523.7 672.2"/>
<path d="M523.7 672.2L512.9 712.2"/>
<path d="M512.9 712.2L497.8 768.6"/>
<path d="M576.7 364.7L551.8 457.7" stroke-width="2.400" stroke="#dcdfe5"/>
<path d="M551.8 457.7L536.4 514.9" stroke-width="2.400" stroke="#dcdfe5"/>
<path d="M536.4 514.9L520.2 575.4" stroke-width="2.400" stroke="#dcdfe5"/>
<path d="M513.5 600.6L495.8 666.5" stroke-width="2.400" stroke="#dcdfe5"/>
<path d="M545.2 356.3L525.3 430.3"/>
<path d="M525.3 430.3L491.7 555.6"/>
<path d="M468.2 643.4L438.9 752.8"/>
<path d="M514.5 348.1L485.2 457.6"/>
<path d="M485.2 457.6L464.3 535.4"/>
<path d="M457.6 560.5L442.1 618.2"/>
<path d="M435.4 643.4L408.3 744.6"/>
<path d="M496.6 343.3L473.4 430.0" stroke-width="2.400" stroke="#dcdfe5"/>
<path d="M466.7 455.1L439.0 558.5" stroke-width="2.400" stroke="#dcdfe5"/>
<path d="M439.0 558.5L425.7 608.0" stroke-width="2.400" stroke="#dcdfe5"/>
<path d="M392.1 733.6L390.4 739.8" stroke-width="2.400" stroke="#dcdfe5"/>
<path d="M467.8 335.6L433.8 462.6"/>
<path d="M433.8 462.6L412.7 541.5"/>
<path d="M412.7 541.5L395.0 607.3"/>
<path d="M388.3 632.4L366.5 713.8"/>
<path d="M436.1 327.1L420.5 385.6"/>
<path d="M420.5 385.6L397.4 471.5"/>
<path d="M397.4 471.5L382.6 527.0"/>
<path d="M382.6 527.0L358.1 618.2"/>
<path d="M358.1 618.2L343.4 673.1"/>
<path d="M343.4 673.1L329.9 723.6"/>
<path d="M410.7 320.3L387.8 405.5" stroke-width="2.400" stroke="#dcdfe5"/>
<path d="M387.8 405.5L364.1 494.0" stroke-width="2.400" stroke="#dcdfe5"/>
<path d="M364.1 494.0L335.7 600.0" stroke-width="2.400" stroke="#dcdfe5"/>
<path d="M335.7 600.0L310.2 695.4" stroke-width="2.400" stroke="#dcdfe5"/>
<path d="M310.2 695.4L304.4 716.8" stroke-width="2.400" stroke="#dcdfe5"/>
<path d="M344.7 472.3L312.8 591.2"/>
<path d="M312.8 591.2L302.1 631.0"/>
<path d="M302.1 631.0L290.2 675.5"/>
<path d="M290.2 675.5L280.9 710.5"/>
<path d="M361.5 307.1L336.5 400.7"/>
<path d="M336.5 400.7L324.9 443.8"/>
<path d="M318.2 468.9L305.7 515.6"/>
<path d="M305.7 515.6L292.5 564.8"/>
<path d="M285.8 589.9L262.8 675.7"/>
<path d="M328.2 298.2L301.0 399.8" stroke-width="2.400" stroke="#dcdfe5"/>
<path d="M301.0 399.8L288.6 446.0" stroke-width="2.400" stroke="#dcdfe5"/>
<path d="M238.3 633.6L225.3 682.1" stroke-width="2.400" stroke="#dcdfe5"/>
<path d="M225.3 682.1L222.0 694.7" stroke-width="2.400" stroke="#dcdfe5"/>
</g>
<clipPath id="gE"><path d="M580 300L660 300L700 420L590 430Z"/></clipPath>
<g clip-path="url(#gE)" fill="none" stroke="#e3e5ea" stroke-width="1.5" stroke-linecap="round">
<path d="M721.0 250.7L731.9 312.8" stroke-width="2.400" stroke="#dcdfe5"/>
<path d="M731.9 312.8L753.4 434.7" stroke-width="2.400" stroke="#dcdfe5"/>
<path d="M753.4 434.7L755.2 444.7" stroke-width="2.400" stroke="#dcdfe5"/>
<path d="M697.3 254.9L712.9 343.0"/>
<path d="M712.9 343.0L731.5 448.8"/>
<path d="M689.4 256.3L698.7 309.3"/>
<path d="M701.5 325.1L710.0 373.3"/>
<path d="M712.8 389.1L723.6 450.2"/>
<path d="M671.9 259.4L693.7 383.0" stroke-width="2.400" stroke="#dcdfe5"/>
<path d="M696.5 398.8L705.9 452.3" stroke-width="2.400" stroke="#dcdfe5"/>
<path d="M705.9 452.3L706.1 453.3" stroke-width="2.400" stroke="#dcdfe5"/>
<path d="M665.4 260.5L689.0 394.1"/>
<path d="M689.0 394.1L699.6 454.5"/>
<path d="M645.2 264.1L661.5 357.0"/>
<path d="M639.5 368.7L656.0 462.2" stroke-width="2.400" stroke="#dcdfe5"/>
<path d="M609.4 270.4L622.8 346.1"/>
<path d="M622.8 346.1L634.9 415.0"/>
<path d="M634.9 415.0L643.6 464.3"/>
<path d="M594.1 273.1L611.1 369.5"/>
<path d="M613.9 385.3L627.0 460.1"/>
<path d="M599.8 394.1L610.0 452.0" stroke-width="2.400" stroke="#dcdfe5"/>
<path d="M612.8 467.8L613.1 469.7" stroke-width="2.400" stroke="#dcdfe5"/>
<path d="M571.6 375.3L589.0 474.0"/>
<path d="M537.4 283.1L553.3 373.2"/>
<path d="M753.6 442.2L700.7 451.5" stroke-width="2.400" stroke="#dcdfe5"/>
<path d="M700.7 451.5L621.5 465.4" stroke-width="2.400" stroke="#dcdfe5"/>
<path d="M621.5 465.4L580.6 472.7" stroke-width="2.400" stroke="#dcdfe5"/>
<path d="M580.6 472.7L559.7 476.4" stroke-width="2.400" stroke="#dcdfe5"/>
<path d="M746.7 403.0L628.1 423.9"/>
<path d="M628.1 423.9L552.7 437.2"/>
<path d="M743.6 385.8L669.1 398.9" stroke-width="2.400" stroke="#dcdfe5"/>
<path d="M669.1 398.9L619.9 407.6" stroke-width="2.400" stroke="#dcdfe5"/>
<path d="M577.1 415.1L549.7 420.0" stroke-width="2.400" stroke="#dcdfe5"/>
<path d="M740.0 365.3L657.3 379.8"/>
<path d="M672.6 357.3L542.7 380.2"/>
<path d="M732.5 322.5L645.4 337.8" stroke-width="2.400" stroke="#dcdfe5"/>
<path d="M645.4 337.8L598.7 346.1" stroke-width="2.400" stroke="#dcdfe5"/>
<path d="M728.4 299.4L628.9 317.0"/>
<path d="M628.9 317.0L537.4 333.1"/>
<path d="M537.4 333.1L534.5 333.6"/>
<path d="M724.6 277.8L652.6 290.5"/>
<path d="M652.6 290.5L582.2 302.9"/>
<path d="M562.5 306.4L530.7 312.0"/>
<path d="M720.7 255.5L619.1 273.4" stroke-width="2.400" stroke="#dcdfe5"/>
<path d="M619.1 273.4L552.9 285.1" stroke-width="2.400" stroke="#dcdfe5"/>
<path d="M552.9 285.1L526.7 289.7" stroke-width="2.400" stroke="#dcdfe5"/>
</g>
<clipPath id="gF"><path d="M690 260L780 260L800 360L760 420L720 405L690 350Z"/></clipPath>
<g clip-path="url(#gF)" fill="none" stroke="#e3e5ea" stroke-width="1.5" stroke-linecap="round">
<path d="M813.2 201.2L846.0 291.5" stroke-width="2.400" stroke="#dcdfe5"/>
<path d="M846.0 291.5L886.2 401.9" stroke-width="2.400" stroke="#dcdfe5"/>
<path d="M886.2 401.9L886.4 402.5" stroke-width="2.400" stroke="#dcdfe5"/>
<path d="M783.8 211.9L820.8 313.5"/>
<path d="M820.8 313.5L857.0 413.2"/>
<path d="M770.2 216.9L797.7 292.6"/>
<path d="M778.6 298.4L806.2 374.1" stroke-width="2.400" stroke="#dcdfe5"/>
<path d="M806.2 374.1L824.7 425.0" stroke-width="2.400" stroke="#dcdfe5"/>
<path d="M733.3 230.3L771.9 336.2"/>
<path d="M771.9 336.2L788.0 380.7"/>
<path d="M788.0 380.7L806.6 431.5"/>
<path d="M710.7 238.5L750.8 348.9"/>
<path d="M750.8 348.9L783.9 439.8"/>
<path d="M695.1 244.2L709.5 284.0" stroke-width="2.400" stroke="#dcdfe5"/>
<path d="M709.5 284.0L731.3 343.8" stroke-width="2.400" stroke="#dcdfe5"/>
<path d="M731.3 343.8L758.7 419.0" stroke-width="2.400" stroke="#dcdfe5"/>
<path d="M758.7 419.0L768.3 445.5" stroke-width="2.400" stroke="#dcdfe5"/>
<path d="M680.6 249.5L698.7 299.2"/>
<path d="M740.1 412.8L753.9 450.7"/>
<path d="M715.0 424.4L728.0 460.2"/>
<path d="M639.1 264.6L680.1 377.0" stroke-width="2.400" stroke="#dcdfe5"/>
<path d="M640.5 308.1L656.1 350.9"/>
<path d="M656.1 350.9L675.1 403.3"/>
<path d="M675.1 403.3L693.7 454.2"/>
<path d="M693.7 454.2L699.6 470.5"/>
<path d="M881.9 403.1L792.2 435.7" stroke-width="2.400" stroke="#dcdfe5"/>
<path d="M792.2 435.7L733.0 457.3" stroke-width="2.400" stroke="#dcdfe5"/>
<path d="M712.3 464.8L680.7 476.3" stroke-width="2.400" stroke="#dcdfe5"/>
<path d="M873.8 380.9L769.9 418.7"/>
<path d="M683.1 450.3L672.6 454.1"/>
<path d="M717.8 409.4L663.5 429.2"/>
<path d="M859.1 340.3L733.2 386.2" stroke-width="2.400" stroke="#dcdfe5"/>
<path d="M850.6 317.1L746.4 355.1"/>
<path d="M843.2 296.6L720.7 341.2"/>
<path d="M720.7 341.2L676.9 357.1"/>
<path d="M656.3 364.6L641.9 369.9"/>
<path d="M710.9 319.0L670.5 333.8" stroke-width="2.400" stroke="#dcdfe5"/>
<path d="M649.8 341.3L633.7 347.2" stroke-width="2.400" stroke="#dcdfe5"/>
<path d="M759.8 271.8L630.0 319.1"/>
<path d="M815.6 221.0L752.9 243.8"/>
<path d="M752.9 243.8L688.8 267.2"/>
<path d="M668.1 274.7L614.4 294.3"/>
</g>
<clipPath id="gC"><path d="M790 400L830 355L1008 370L1052 385L1052 470L960 500L900 540L880 470L800 455Z"/></clipPath>
<g clip-path="url(#gC)" fill="none" stroke="#e3e5ea" stroke-width="1.5" stroke-linecap="round">
<path d="M714.7 324.2L797.5 303.6" stroke-width="2.400" stroke="#dcdfe5"/>
<path d="M797.5 303.6L918.9 273.3" stroke-width="2.400" stroke="#dcdfe5"/>
<path d="M1033.3 244.8L1045.3 241.8" stroke-width="2.400" stroke="#dcdfe5"/>
<path d="M773.2 330.9L900.5 299.1"/>
<path d="M900.5 299.1L948.8 287.1"/>
<path d="M965.3 283.0L1012.8 271.1"/>
<path d="M722.8 356.8L822.5 331.9"/>
<path d="M822.5 331.9L910.3 310.0"/>
<path d="M926.8 305.9L1033.3 279.3"/>
<path d="M1033.3 279.3L1053.4 274.3"/>
<path d="M726.9 373.2L778.9 360.3" stroke-width="2.400" stroke="#dcdfe5"/>
<path d="M778.9 360.3L839.4 345.2" stroke-width="2.400" stroke="#dcdfe5"/>
<path d="M929.7 322.7L1002.4 304.5" stroke-width="2.400" stroke="#dcdfe5"/>
<path d="M1002.4 304.5L1057.5 290.8" stroke-width="2.400" stroke="#dcdfe5"/>
<path d="M729.8 384.7L862.3 351.7"/>
<path d="M862.3 351.7L940.8 332.1"/>
<path d="M940.8 332.1L1005.5 316.0"/>
<path d="M1005.5 316.0L1060.4 302.3"/>
<path d="M735.8 408.9L859.4 378.1"/>
<path d="M875.9 374.0L955.7 354.1"/>
<path d="M972.2 350.0L1066.4 326.5"/>
<path d="M740.4 427.2L866.3 395.8" stroke-width="2.400" stroke="#dcdfe5"/>
<path d="M964.1 371.4L1070.2 345.0" stroke-width="2.400" stroke="#dcdfe5"/>
<path d="M1070.2 345.0L1071.0 344.8" stroke-width="2.400" stroke="#dcdfe5"/>
<path d="M745.2 446.5L872.1 414.8"/>
<path d="M872.1 414.8L977.4 388.6"/>
<path d="M977.4 388.6L1060.4 367.9"/>
<path d="M750.0 465.8L838.3 443.8"/>
<path d="M854.8 439.7L916.3 424.3"/>
<path d="M932.8 420.2L1006.1 401.9"/>
<path d="M1006.1 401.9L1080.6 383.4"/>
<path d="M920.8 437.3L1010.3 415.0" stroke-width="2.400" stroke="#dcdfe5"/>
<path d="M1010.3 415.0L1083.9 396.6" stroke-width="2.400" stroke="#dcdfe5"/>
<path d="M757.0 493.9L874.7 464.6"/>
<path d="M874.7 464.6L928.3 451.2"/>
<path d="M1029.3 426.0L1087.6 411.5"/>
<path d="M759.7 505.0L823.0 489.2"/>
<path d="M823.0 489.2L926.1 463.5"/>
<path d="M926.1 463.5L1008.8 442.8"/>
<path d="M1025.3 438.7L1090.4 422.5"/>
<path d="M764.5 524.2L880.8 495.2" stroke-width="2.400" stroke="#dcdfe5"/>
<path d="M880.8 495.2L920.2 485.3" stroke-width="2.400" stroke="#dcdfe5"/>
<path d="M936.7 481.2L1026.0 459.0" stroke-width="2.400" stroke="#dcdfe5"/>
<path d="M767.3 535.2L861.5 511.7"/>
<path d="M861.5 511.7L930.0 494.6"/>
<path d="M930.0 494.6L993.6 478.8"/>
<path d="M1010.1 474.7L1057.8 462.8"/>
<path d="M1057.8 462.8L1097.9 452.8"/>
<path d="M772.1 554.4L815.1 543.6"/>
<path d="M815.1 543.6L858.0 533.0"/>
<path d="M874.5 528.8L955.1 508.7"/>
<path d="M955.1 508.7L1028.1 490.5"/>
<path d="M1028.1 490.5L1102.7 472.0"/>
<path d="M775.1 566.7L897.4 536.2" stroke-width="2.400" stroke="#dcdfe5"/>
<path d="M913.9 532.1L989.5 513.2" stroke-width="2.400" stroke="#dcdfe5"/>
<path d="M1006.0 509.1L1105.7 484.2" stroke-width="2.400" stroke="#dcdfe5"/>
<path d="M779.4 583.6L908.9 551.3"/>
<path d="M925.4 547.2L1004.5 527.5"/>
<path d="M1004.5 527.5L1086.0 507.2"/>
<path d="M1086.0 507.2L1110.0 501.2"/>
<path d="M784.4 603.8L851.7 587.0"/>
<path d="M868.2 582.9L981.7 554.6"/>
<path d="M981.7 554.6L1102.8 524.4"/>
<path d="M1102.8 524.4L1115.0 521.4"/>
<path d="M786.9 614.0L891.8 587.9" stroke-width="2.400" stroke="#dcdfe5"/>
<path d="M908.3 583.8L1030.9 553.2" stroke-width="2.400" stroke="#dcdfe5"/>
<path d="M1047.4 549.1L1117.6 531.6" stroke-width="2.400" stroke="#dcdfe5"/>
<path d="M793.4 640.0L846.4 626.8"/>
<path d="M846.4 626.8L903.2 612.7"/>
<path d="M903.2 612.7L950.4 600.9"/>
<path d="M950.4 600.9L1043.2 577.8"/>
<path d="M1059.7 573.7L1124.0 557.6"/>
<path d="M1042.3 241.7L1072.7 363.6" stroke-width="2.400" stroke="#dcdfe5"/>
<path d="M1072.7 363.6L1085.6 415.2" stroke-width="2.400" stroke="#dcdfe5"/>
<path d="M1085.6 415.2L1117.8 544.5" stroke-width="2.400" stroke="#dcdfe5"/>
<path d="M1024.6 246.1L1050.4 349.3"/>
<path d="M1050.4 349.3L1073.0 439.8"/>
<path d="M1073.0 439.8L1083.5 482.1"/>
<path d="M1088.1 500.5L1104.8 567.6"/>
<path d="M1006.3 250.6L1020.9 309.2"/>
<path d="M1020.9 309.2L1041.1 390.1"/>
<path d="M1072.7 517.0L1088.8 581.3"/>
<path d="M986.7 255.5L1000.2 309.8" stroke-width="2.400" stroke="#dcdfe5"/>
<path d="M1000.2 309.8L1022.4 398.7" stroke-width="2.400" stroke="#dcdfe5"/>
<path d="M969.8 259.8L980.8 304.1"/>
<path d="M980.8 304.1L994.4 358.4"/>
<path d="M994.4 358.4L1025.2 482.1"/>
<path d="M1025.2 482.1L1042.4 551.0"/>
<path d="M1042.4 551.0L1052.2 590.4"/>
<path d="M952.9 264.0L971.8 339.6"/>
<path d="M971.8 339.6L997.3 442.0"/>
<path d="M997.3 442.0L1018.2 525.9"/>
<path d="M1022.8 544.3L1035.3 594.6"/>
<path d="M962.5 398.0L979.2 465.0" stroke-width="2.400" stroke="#dcdfe5"/>
<path d="M904.9 275.9L929.0 372.8"/>
<path d="M929.0 372.8L943.5 431.1"/>
<path d="M943.5 431.1L967.2 526.1"/>
<path d="M967.2 526.1L987.3 606.6"/>
<path d="M892.2 279.1L909.9 350.2"/>
<path d="M909.9 350.2L927.5 421.0"/>
<path d="M927.5 421.0L956.3 536.3"/>
<path d="M956.3 536.3L974.6 609.7"/>
<path d="M865.8 285.7L886.7 369.3" stroke-width="2.400" stroke="#dcdfe5"/>
<path d="M886.7 369.3L906.4 448.1" stroke-width="2.400" stroke="#dcdfe5"/>
<path d="M911.0 466.6L934.6 561.5" stroke-width="2.400" stroke="#dcdfe5"/>
<path d="M934.6 561.5L948.3 616.3" stroke-width="2.400" stroke="#dcdfe5"/>
<path d="M868.8 379.9L885.8 448.2"/>
<path d="M885.8 448.2L916.8 572.3"/>
<path d="M921.4 590.7L928.9 621.1"/>
<path d="M835.0 293.4L857.7 384.1"/>
<path d="M857.7 384.1L890.3 515.0"/>
<path d="M814.3 298.5L846.8 428.9" stroke-width="2.400" stroke="#dcdfe5"/>
<path d="M846.8 428.9L873.1 534.5" stroke-width="2.400" stroke="#dcdfe5"/>
<path d="M873.1 534.5L886.5 588.3" stroke-width="2.400" stroke="#dcdfe5"/>
<path d="M886.5 588.3L896.7 629.1" stroke-width="2.400" stroke="#dcdfe5"/>
<path d="M789.0 304.8L800.8 351.8"/>
<path d="M800.8 351.8L816.3 414.3"/>
<path d="M816.3 414.3L845.9 532.8"/>
<path d="M845.9 532.8L871.5 635.4"/>
<path d="M772.6 308.9L801.9 426.4"/>
<path d="M816.4 484.7L845.1 599.8"/>
<path d="M845.1 599.8L855.0 639.5"/>
<path d="M756.6 312.9L769.6 365.3" stroke-width="2.400" stroke="#dcdfe5"/>
<path d="M769.6 365.3L795.9 470.7" stroke-width="2.400" stroke="#dcdfe5"/>
<path d="M795.9 470.7L829.7 606.3" stroke-width="2.400" stroke="#dcdfe5"/>
<path d="M834.3 624.7L839.0 643.5" stroke-width="2.400" stroke="#dcdfe5"/>
<path d="M730.5 319.4L755.6 420.0"/>
<path d="M755.6 420.0L785.7 540.8"/>
<path d="M811.2 642.8L813.0 650.0"/>
</g>
<clipPath id="gG"><path d="M900 640L1052 640L1052 745L940 745L905 700Z"/></clipPath>
<g clip-path="url(#gG)" fill="none" stroke="#e3e5ea" stroke-width="1.5" stroke-linecap="round">
<path d="M926.1 557.3L1021.7 601.9" stroke-width="2.400" stroke="#dcdfe5"/>
<path d="M1021.7 601.9L1111.7 643.8" stroke-width="2.400" stroke="#dcdfe5"/>
<path d="M916.0 579.0L974.0 606.1"/>
<path d="M974.0 606.1L1089.8 660.1"/>
<path d="M1089.8 660.1L1101.5 665.6"/>
<path d="M908.3 595.4L952.5 616.0"/>
<path d="M1066.0 669.0L1093.9 681.9"/>
<path d="M897.5 618.6L1013.4 672.6" stroke-width="2.400" stroke="#dcdfe5"/>
<path d="M1030.6 680.6L1083.1 705.1" stroke-width="2.400" stroke="#dcdfe5"/>
<path d="M892.6 629.1L964.6 662.6"/>
<path d="M964.6 662.6L1027.3 691.9"/>
<path d="M880.9 654.2L928.1 676.2"/>
<path d="M1003.1 724.8L1061.3 751.9" stroke-width="2.400" stroke="#dcdfe5"/>
<path d="M863.7 691.1L935.4 724.5"/>
<path d="M935.4 724.5L981.0 745.8"/>
<path d="M981.0 745.8L1049.3 777.6"/>
<path d="M857.7 704.1L916.9 731.7"/>
<path d="M993.4 767.4L1043.2 790.6"/>
<path d="M847.6 725.6L889.3 745.0" stroke-width="2.400" stroke="#dcdfe5"/>
<path d="M962.2 797.3L1001.6 815.6"/>
<path d="M1111.2 642.6L1069.9 731.1" stroke-width="2.400" stroke="#dcdfe5"/>
<path d="M1060.6 751.0L1036.4 803.0" stroke-width="2.400" stroke="#dcdfe5"/>
<path d="M1036.4 803.0L1024.6 828.1" stroke-width="2.400" stroke="#dcdfe5"/>
<path d="M1072.4 624.5L1048.6 675.4"/>
<path d="M1048.6 675.4L998.2 783.6"/>
<path d="M1050.4 614.2L1026.3 666.0" stroke-width="2.400" stroke="#dcdfe5"/>
<path d="M984.5 755.4L963.9 799.8" stroke-width="2.400" stroke="#dcdfe5"/>
<path d="M976.6 716.7L955.1 762.8"/>
<path d="M945.8 782.8L942.5 789.8"/>
<path d="M1013.4 597.0L958.1 715.6"/>
<path d="M948.8 735.6L926.9 782.6"/>
<path d="M996.3 589.0L956.8 673.8" stroke-width="2.400" stroke="#dcdfe5"/>
<path d="M947.5 693.8L909.8 774.6" stroke-width="2.400" stroke="#dcdfe5"/>
<path d="M921.6 687.8L893.7 747.6"/>
<path d="M893.7 747.6L886.3 763.6"/>
<path d="M948.2 566.6L920.1 626.9"/>
<path d="M920.1 626.9L866.2 742.5"/>
<path d="M927.1 556.7L870.9 677.3" stroke-width="2.400" stroke="#dcdfe5"/>
<path d="M870.9 677.3L840.5 742.3" stroke-width="2.400" stroke="#dcdfe5"/>
</g>
<clipPath id="gH"><path d="M800 700L890 705L930 745L925 802L790 802Z"/></clipPath>
<g clip-path="url(#gH)" fill="none" stroke="#e3e5ea" stroke-width="1.5" stroke-linecap="round">
<path d="M872.6 614.3L958.8 717.0" stroke-width="2.400" stroke="#dcdfe5"/>
<path d="M958.8 717.0L996.8 762.3" stroke-width="2.400" stroke="#dcdfe5"/>
<path d="M861.5 623.6L943.2 721.1"/>
<path d="M846.6 636.1L931.7 737.6"/>
<path d="M931.7 737.6L970.8 784.2"/>
<path d="M877.8 697.9L913.2 740.1" stroke-width="2.400" stroke="#dcdfe5"/>
<path d="M807.7 668.8L837.7 704.6"/>
<path d="M902.5 781.8L931.9 816.8"/>
<path d="M822.7 717.8L862.5 765.2" stroke-width="2.400" stroke="#dcdfe5"/>
<path d="M862.5 765.2L916.6 829.6" stroke-width="2.400" stroke="#dcdfe5"/>
<path d="M779.2 692.7L807.0 725.8"/>
<path d="M817.9 738.8L850.7 777.9"/>
<path d="M850.7 777.9L903.4 840.7"/>
<path d="M805.3 750.2L845.4 798.0"/>
<path d="M845.4 798.0L890.4 851.6"/>
<path d="M752.9 714.8L804.3 776.1" stroke-width="2.400" stroke="#dcdfe5"/>
<path d="M740.8 724.9L807.8 804.7"/>
<path d="M818.7 817.7L865.0 872.9"/>
<path d="M726.9 736.6L759.8 775.8"/>
<path d="M790.4 812.3L844.3 876.5"/>
<path d="M844.3 876.5L851.1 884.6"/>
<path d="M993.4 759.6L892.3 844.5" stroke-width="2.400" stroke="#dcdfe5"/>
<path d="M892.3 844.5L856.8 874.2" stroke-width="2.400" stroke="#dcdfe5"/>
<path d="M856.8 874.2L845.4 883.8" stroke-width="2.400" stroke="#dcdfe5"/>
<path d="M982.5 746.7L908.5 808.7"/>
<path d="M908.5 808.7L854.5 854.1"/>
<path d="M854.5 854.1L834.5 870.9"/>
<path d="M969.4 731.0L930.9 763.3"/>
<path d="M954.7 713.6L914.3 747.6" stroke-width="2.400" stroke="#dcdfe5"/>
<path d="M914.3 747.6L844.7 805.9" stroke-width="2.400" stroke="#dcdfe5"/>
<path d="M940.3 696.4L834.5 785.1"/>
<path d="M935.5 690.7L888.4 730.1"/>
<path d="M841.1 769.8L787.5 814.9"/>
<path d="M919.0 671.0L845.5 732.7" stroke-width="2.400" stroke="#dcdfe5"/>
<path d="M845.5 732.7L814.3 758.9" stroke-width="2.400" stroke="#dcdfe5"/>
<path d="M814.3 758.9L771.0 795.2" stroke-width="2.400" stroke="#dcdfe5"/>
<path d="M814.4 727.2L755.4 776.7"/>
<path d="M810.0 704.8L742.6 761.3"/>
<path d="M877.8 621.9L809.0 679.6" stroke-width="2.400" stroke="#dcdfe5"/>
</g>
<g fill="#caedd6">
<path d="M878 273L950 273L948 300L930 315L905 328L882 320Z"/>
<path d="M703 478L749 462L755 497L712 513Z"/><path d="M753 517H771V533H753Z"/>
<path d="M898 500L944 488V515L905 527Z"/><path d="M955 456H978V488H955Z"/><path d="M859 507H880L884 539H862Z"/><path d="M839 584H862V603H839Z"/>
<path d="M740 730L770 717L787 745L775 778H745Z"/><path d="M609 677H646V691H609Z"/><path d="M653 787H672V802H653Z"/><path d="M586 560H606V590H590Z"/><path d="M657 496L668 492L674 516L663 520Z"/>
<path d="M688 345L702 340L705 350L692 356Z"/><path d="M842 612H850V622H842Z"/><path d="M680 520H700V545H680Z"/>
</g>
<g fill="none" stroke="#dde0e6" stroke-width="2" stroke-linecap="round" stroke-linejoin="round">
<path d="M347.0 270.0C351.8 268.7 342.9 265.8 365.0 265.0C387.1 264.2 402.0 271.0 430.0 267.0C458.0 263.0 452.7 262.3 470.0 250.0C487.3 237.7 488.3 228.7 495.0 221.0"/>
<path d="M382.0 425.0C383.3 432.7 381.4 426.0 387.0 454.0C392.6 482.0 397.4 501.2 403.0 530.0C408.6 558.8 408.8 543.3 408.0 562.0C407.2 580.7 407.5 579.2 400.0 600.0C392.5 620.8 387.5 613.3 380.0 640.0C372.5 666.7 369.3 668.0 372.0 700.0C374.7 732.0 377.2 732.8 390.0 760.0C402.8 787.2 412.0 790.8 420.0 802.0"/>
<path d="M360.0 530.0C371.5 528.1 376.3 529.9 403.0 523.0C429.7 516.1 435.7 512.0 460.0 504.0C484.3 496.0 472.7 502.1 494.0 493.0C515.3 483.9 518.4 480.1 540.0 470.0C561.6 459.9 565.7 459.0 575.0 455.0"/>
<path d="M385.0 532.0C402.1 534.4 420.5 534.3 449.0 541.0C477.5 547.7 455.5 541.3 492.0 557.0C528.5 572.7 546.5 581.9 586.0 600.0C625.5 618.1 609.6 609.0 640.0 625.0C670.4 641.0 668.0 640.0 700.0 660.0C732.0 680.0 733.3 678.7 760.0 700.0C786.7 721.3 778.7 712.8 800.0 740.0C821.3 767.2 829.3 785.5 840.0 802.0"/>
<path d="M360.0 530.0C360.5 534.8 359.6 533.6 362.0 548.0C364.4 562.4 369.5 569.3 369.0 584.0C368.5 598.7 363.2 593.4 360.0 603.0C356.8 612.6 357.8 615.5 357.0 620.0"/>
<path d="M369.0 587.0C381.3 587.5 389.4 587.4 415.0 589.0C440.6 590.6 440.7 595.4 465.0 593.0C489.3 590.6 473.7 592.0 506.0 580.0C538.3 568.0 564.7 556.5 586.0 548.0"/>
<path d="M446.0 459.0C471.6 451.5 506.3 440.1 542.0 431.0C577.7 421.9 569.9 426.6 580.0 425.0"/>
<path d="M400.0 600.0C416.0 605.3 428.0 609.3 460.0 620.0C492.0 630.7 486.4 627.2 520.0 640.0C553.6 652.8 554.0 652.0 586.0 668.0C618.0 684.0 609.6 680.8 640.0 700.0C670.4 719.2 668.0 716.0 700.0 740.0C732.0 764.0 744.0 776.7 760.0 790.0"/>
<path d="M347.0 660.0C361.1 657.3 372.5 655.3 400.0 650.0C427.5 644.7 423.3 643.7 450.0 640.0C476.7 636.3 470.7 640.8 500.0 636.0C529.3 631.2 528.0 631.6 560.0 622.0C592.0 612.4 604.0 605.9 620.0 600.0"/>
<path d="M347.0 720.0C366.5 714.7 384.5 708.0 420.0 700.0C455.5 692.0 448.0 695.3 480.0 690.0C512.0 684.7 508.0 688.0 540.0 680.0C572.0 672.0 568.0 670.7 600.0 660.0C632.0 649.3 628.0 652.8 660.0 640.0C692.0 627.2 704.0 619.5 720.0 612.0"/>
<path d="M420.0 802.0C433.3 790.8 443.3 781.9 470.0 760.0C496.7 738.1 496.0 738.7 520.0 720.0C544.0 701.3 538.7 706.0 560.0 690.0C581.3 674.0 589.3 668.0 600.0 660.0"/>
<path d="M470.0 802.0C483.3 793.5 490.7 789.2 520.0 770.0C549.3 750.8 548.0 751.3 580.0 730.0C612.0 708.7 610.7 711.3 640.0 690.0C669.3 668.7 676.7 660.7 690.0 650.0"/>
<path d="M540.0 802.0C553.3 793.5 563.3 787.9 590.0 770.0C616.7 752.1 610.7 753.7 640.0 735.0C669.3 716.3 684.0 709.3 700.0 700.0"/>
<path d="M600.0 802.0C613.3 793.5 623.3 786.5 650.0 770.0C676.7 753.5 676.0 754.7 700.0 740.0C724.0 725.3 729.3 721.7 740.0 715.0"/>
<path d="M430.0 640.0C440.7 656.0 446.0 665.3 470.0 700.0C494.0 734.7 500.0 742.8 520.0 770.0C540.0 797.2 538.3 793.5 545.0 802.0"/>
<path d="M480.0 618.0C493.3 634.5 500.7 642.1 530.0 680.0C559.3 717.9 566.0 727.5 590.0 760.0C614.0 792.5 612.0 790.8 620.0 802.0"/>
<path d="M540.0 600.0C553.3 616.0 560.7 622.7 590.0 660.0C619.3 697.3 620.7 702.1 650.0 740.0C679.3 777.9 686.7 785.5 700.0 802.0"/>
<path d="M600.0 590.0C613.3 606.0 623.3 615.3 650.0 650.0C676.7 684.7 673.3 679.5 700.0 720.0C726.7 760.5 736.7 780.1 750.0 802.0"/>
<path d="M575.0 280.0C576.3 293.3 579.2 303.3 580.0 330.0C580.8 356.7 575.3 353.3 578.0 380.0C580.7 406.7 584.1 406.0 590.0 430.0C595.9 454.0 594.7 446.0 600.0 470.0C605.3 494.0 606.0 496.0 610.0 520.0C614.0 544.0 613.7 549.3 615.0 560.0"/>
<path d="M600.0 290.0C601.1 303.3 601.3 313.3 604.0 340.0C606.7 366.7 605.2 363.3 610.0 390.0C614.8 416.7 615.3 416.0 622.0 440.0C628.7 464.0 627.5 458.7 635.0 480.0C642.5 501.3 641.2 498.7 650.0 520.0C658.8 541.3 657.3 536.0 668.0 560.0C678.7 584.0 676.1 583.3 690.0 610.0C703.9 636.7 712.0 646.7 720.0 660.0"/>
<path d="M620.0 300.0C622.1 313.3 622.7 323.3 628.0 350.0C633.3 376.7 632.8 376.0 640.0 400.0C647.2 424.0 647.0 421.3 655.0 440.0C663.0 458.7 666.0 462.0 670.0 470.0"/>
<path d="M560.0 395.0C570.7 396.3 576.0 396.0 600.0 400.0C624.0 404.0 623.3 404.7 650.0 410.0C676.7 415.3 676.0 414.7 700.0 420.0C724.0 425.3 729.3 427.3 740.0 430.0"/>
<path d="M590.0 430.0C603.3 434.0 613.3 437.0 640.0 445.0C666.7 453.0 663.3 451.2 690.0 460.0C716.7 468.8 713.3 467.3 740.0 478.0C766.7 488.7 763.3 488.8 790.0 500.0C816.7 511.2 826.7 514.7 840.0 520.0"/>
<path d="M600.0 470.0C613.3 474.0 623.3 477.0 650.0 485.0C676.7 493.0 673.3 490.7 700.0 500.0C726.7 509.3 723.3 508.0 750.0 520.0C776.7 532.0 773.3 530.3 800.0 545.0C826.7 559.7 836.7 567.0 850.0 575.0"/>
<path d="M610.0 520.0C623.3 524.0 633.3 525.7 660.0 535.0C686.7 544.3 683.3 543.0 710.0 555.0C736.7 567.0 733.3 565.3 760.0 580.0C786.7 594.7 783.3 594.0 810.0 610.0C836.7 626.0 846.7 632.0 860.0 640.0"/>
<path d="M560.0 500.0C570.7 502.7 578.7 504.7 600.0 510.0C621.3 515.3 629.3 517.3 640.0 520.0"/>
<path d="M640.0 560.0C656.0 565.3 668.0 566.7 700.0 580.0C732.0 593.3 728.0 591.3 760.0 610.0C792.0 628.7 790.7 628.7 820.0 650.0C849.3 671.3 856.7 679.3 870.0 690.0"/>
<path d="M700.0 221.0C702.1 231.4 702.1 238.9 708.0 260.0C713.9 281.1 716.1 278.7 722.0 300.0C727.9 321.3 726.5 318.7 730.0 340.0C733.5 361.3 732.3 358.7 735.0 380.0C737.7 401.3 736.0 396.0 740.0 420.0C744.0 444.0 744.7 443.3 750.0 470.0C755.3 496.7 753.3 493.3 760.0 520.0C766.7 546.7 767.0 543.3 775.0 570.0C783.0 596.7 783.3 596.0 790.0 620.0C796.7 644.0 797.3 649.3 800.0 660.0"/>
<path d="M730.0 221.0C731.6 228.7 734.4 242.3 736.0 250.0"/>
<path d="M786.0 221.0C789.7 228.7 794.1 231.6 800.0 250.0C805.9 268.4 806.4 268.7 808.0 290.0C809.6 311.3 808.1 311.3 806.0 330.0C803.9 348.7 804.3 346.7 800.0 360.0C795.7 373.3 792.7 374.7 790.0 380.0"/>
<path d="M735.0 380.0C741.7 377.9 742.7 376.0 760.0 372.0C777.3 368.0 781.3 370.9 800.0 365.0C818.7 359.1 814.0 358.0 830.0 350.0C846.0 342.0 844.0 343.0 860.0 335.0C876.0 327.0 875.3 329.3 890.0 320.0C904.7 310.7 901.7 310.7 915.0 300.0C928.3 289.3 933.3 285.3 940.0 280.0"/>
<path d="M760.0 420.0C770.7 417.3 778.7 414.0 800.0 410.0C821.3 406.0 818.7 407.7 840.0 405.0C861.3 402.3 858.7 401.9 880.0 400.0C901.3 398.1 898.7 399.3 920.0 398.0C941.3 396.7 938.7 396.6 960.0 395.0C981.3 393.4 975.5 393.9 1000.0 392.0C1024.5 390.1 1038.1 389.1 1052.0 388.0"/>
<path d="M820.0 440.0C833.3 437.3 843.3 435.3 870.0 430.0C896.7 424.7 893.3 425.3 920.0 420.0C946.7 414.7 943.3 415.9 970.0 410.0C996.7 404.1 998.1 403.3 1020.0 398.0C1041.9 392.7 1043.5 392.1 1052.0 390.0"/>
<path d="M800.0 470.0C813.3 467.3 823.3 466.7 850.0 460.0C876.7 453.3 873.3 453.0 900.0 445.0C926.7 437.0 923.3 438.0 950.0 430.0C976.7 422.0 972.8 423.0 1000.0 415.0C1027.2 407.0 1038.1 404.0 1052.0 400.0"/>
<path d="M836.0 460.0C847.7 462.7 854.9 464.7 880.0 470.0C905.1 475.3 908.7 480.0 930.0 480.0C951.3 480.0 941.3 476.7 960.0 470.0C978.7 463.3 975.5 464.3 1000.0 455.0C1024.5 445.7 1038.1 440.3 1052.0 435.0"/>
<path d="M850.0 380.0C851.3 390.7 851.8 398.7 855.0 420.0C858.2 441.3 856.7 438.7 862.0 460.0C867.3 481.3 866.2 478.7 875.0 500.0C883.8 521.3 884.1 529.6 895.0 540.0C905.9 550.4 910.4 539.3 916.0 539.0"/>
<path d="M935.0 360.0C936.3 370.7 937.3 378.7 940.0 400.0C942.7 421.3 943.7 429.3 945.0 440.0"/>
<path d="M895.0 540.0C904.3 550.7 913.5 563.5 930.0 580.0C946.5 596.5 942.3 586.0 957.0 602.0C971.7 618.0 970.9 619.2 985.0 640.0C999.1 660.8 998.0 658.7 1010.0 680.0C1022.0 701.3 1018.8 698.7 1030.0 720.0C1041.2 741.3 1046.1 749.3 1052.0 760.0"/>
<path d="M890.0 540.0C884.7 545.3 880.7 550.7 870.0 560.0C859.3 569.3 860.7 567.0 850.0 575.0C839.3 583.0 843.3 583.3 830.0 590.0C816.7 596.7 808.0 597.3 800.0 600.0"/>
<path d="M900.0 640.0C910.7 642.7 918.7 646.0 940.0 650.0C961.3 654.0 958.7 655.0 980.0 655.0C1001.3 655.0 1000.8 654.0 1020.0 650.0C1039.2 646.0 1043.5 642.7 1052.0 640.0"/>
<path d="M920.0 690.0C930.7 692.7 938.7 692.0 960.0 700.0C981.3 708.0 978.7 708.0 1000.0 720.0C1021.3 732.0 1029.3 738.3 1040.0 745.0"/>
<path d="M830.0 590.0C832.7 603.3 834.7 613.3 840.0 640.0C845.3 666.7 844.7 663.3 850.0 690.0C855.3 716.7 854.7 710.1 860.0 740.0C865.3 769.9 867.3 785.5 870.0 802.0"/>
<path d="M780.0 600.0C785.3 613.3 789.3 623.3 800.0 650.0C810.7 676.7 809.3 673.3 820.0 700.0C830.7 726.7 832.0 722.8 840.0 750.0C848.0 777.2 847.3 788.1 850.0 802.0"/>
<path d="M347.0 560.0C350.5 557.3 356.5 552.7 360.0 550.0"/>
<path d="M347.0 500.0C355.8 497.3 360.5 495.3 380.0 490.0C399.5 484.7 402.4 488.3 420.0 480.0C437.6 471.7 439.1 464.6 446.0 459.0"/>
<path d="M400.0 425.0C412.3 434.1 427.3 444.3 446.0 459.0C464.7 473.7 457.2 470.9 470.0 480.0C482.8 489.1 487.6 489.5 494.0 493.0"/>
<path d="M520.0 436.0C522.7 445.1 524.7 452.9 530.0 470.0C535.3 487.1 532.0 481.3 540.0 500.0C548.0 518.7 547.7 518.7 560.0 540.0C572.3 561.3 579.1 569.3 586.0 580.0"/>
</g>
<g fill="none" stroke="#d3d9e2" stroke-width="3" stroke-linecap="round" stroke-linejoin="round">
<path d="M382 425L387 454L403 530L408 562"/>
<path d="M385 532L449 541L492 557L586 600L640 625"/>
<path d="M700 221L708 260L722 300L730 340L735 380L740 420"/>
<path d="M760 420L800 410L840 405L880 400L920 398"/>
<path d="M836 460L880 470L930 480L960 470L1000 455L1052 435"/>
<path d="M895 540L930 580L957 602"/>
<path d="M600 470L650 485L700 500L750 520L800 545L850 575"/>
<path d="M506 326L586 334L640 340"/>
</g>
<path d="M786 221C800 250 810 290 806 330C804 350 796 370 790 385" fill="none" stroke="#c9ced8" stroke-width="2.500"/>
<path d="M650 590L700 650L740 700L780 760L800 802" fill="none" stroke="#d8dbe2" stroke-width="4"/>
<g fill="none" stroke-linecap="round" stroke-linejoin="round">
<path d="M346.0 439.7C358.2 433.6 360.0 434.3 382.5 421.5C405.0 408.7 396.6 414.8 413.6 401.4C430.6 388.0 419.6 395.9 433.6 381.3C447.6 366.7 442.1 371.6 455.5 357.6C468.9 343.6 462.2 349.7 473.8 339.3C485.4 328.9 479.9 332.3 490.2 326.5C500.5 320.7 492.0 323.8 504.8 322.0C517.6 320.2 514.6 322.2 528.6 321.0C542.6 319.8 535.9 321.3 546.8 318.3C557.7 315.3 552.9 317.7 561.4 311.9C569.9 306.1 565.7 308.3 572.4 301.0C579.1 293.7 575.6 297.0 581.5 290.0C587.4 283.0 583.9 285.8 590.0 280.0C596.1 274.2 592.7 281.2 599.7 272.5C606.7 263.8 604.2 266.9 611.0 254.0C617.8 241.1 614.7 245.4 620.0 233.7C625.3 222.0 624.7 223.9 627.0 219.0" stroke="#75829f" stroke-width="6.800"/><path d="M346.0 439.7C358.2 433.6 360.0 434.3 382.5 421.5C405.0 408.7 396.6 414.8 413.6 401.4C430.6 388.0 419.6 395.9 433.6 381.3C447.6 366.7 442.1 371.6 455.5 357.6C468.9 343.6 462.2 349.7 473.8 339.3C485.4 328.9 479.9 332.3 490.2 326.5C500.5 320.7 492.0 323.8 504.8 322.0C517.6 320.2 514.6 322.2 528.6 321.0C542.6 319.8 535.9 321.3 546.8 318.3C557.7 315.3 552.9 317.7 561.4 311.9C569.9 306.1 565.7 308.3 572.4 301.0C579.1 293.7 575.6 297.0 581.5 290.0C587.4 283.0 583.9 285.8 590.0 280.0C596.1 274.2 592.7 281.2 599.7 272.5C606.7 263.8 604.2 266.9 611.0 254.0C617.8 241.1 614.7 245.4 620.0 233.7C625.3 222.0 624.7 223.9 627.0 219.0" stroke="#9dabd0" stroke-width="4.600"/>
<path d="M390 414C384 420 382 428 383 436L385.500 452" stroke="#7f8cab" stroke-width="3.400"/>
<path d="M1052.0 612.0C1038.7 617.3 1034.7 620.3 1012.0 628.0C989.3 635.7 1005.7 624.0 984.0 635.0C962.3 646.0 976.3 640.0 947.0 661.0C917.7 682.0 919.3 681.7 896.0 698.0C872.7 714.3 896.0 703.7 877.0 710.0C858.0 716.3 859.3 709.3 839.0 717.0C818.7 724.7 830.3 717.3 816.0 733.0C801.7 748.7 807.3 741.0 796.0 764.0C784.7 787.0 786.7 789.3 782.0 802.0" stroke="#7a88a6" stroke-width="5"/><path d="M1052.0 612.0C1038.7 617.3 1034.7 620.3 1012.0 628.0C989.3 635.7 1005.7 624.0 984.0 635.0C962.3 646.0 976.3 640.0 947.0 661.0C917.7 682.0 919.3 681.7 896.0 698.0C872.7 714.3 896.0 703.7 877.0 710.0C858.0 716.3 859.3 709.3 839.0 717.0C818.7 724.7 830.3 717.3 816.0 733.0C801.7 748.7 807.3 741.0 796.0 764.0C784.7 787.0 786.7 789.3 782.0 802.0" stroke="#a0aed2" stroke-width="3.200"/>
<path d="M1036 743L1052 773" stroke="#8d9bbf" stroke-width="4"/>
<path d="M1040 612L1052 606" stroke="#5f78c8" stroke-width="4"/>
</g>
<circle cx="877" cy="711" r="3" fill="#f6f7f8" stroke="#8d9bbf" stroke-width="1.500"/>
<text x="594" y="357" font-size="16.5" text-anchor="middle" textLength="71" lengthAdjust="spacingAndGlyphs"  fill="#f7f8f9" stroke="#f7f8f9" stroke-width="3.200" stroke-linejoin="round">Maxéville</text>
<text x="594" y="357" font-size="16.5" text-anchor="middle" textLength="71" lengthAdjust="spacingAndGlyphs"  fill="#2b2c2e" stroke="#2b2c2e" stroke-width="0.45">Maxéville</text>
<text x="721" y="387" font-size="16.5" text-anchor="middle" textLength="75" lengthAdjust="spacingAndGlyphs"  fill="#f7f8f9" stroke="#f7f8f9" stroke-width="3.200" stroke-linejoin="round">Malzéville</text>
<text x="721" y="387" font-size="16.5" text-anchor="middle" textLength="75" lengthAdjust="spacingAndGlyphs"  fill="#2b2c2e" stroke="#2b2c2e" stroke-width="0.45">Malzéville</text>
<text x="940" y="339" font-size="16.5" text-anchor="middle" textLength="117" lengthAdjust="spacingAndGlyphs"  fill="#f7f8f9" stroke="#f7f8f9" stroke-width="3.200" stroke-linejoin="round">Dommartemont</text>
<text x="940" y="339" font-size="16.5" text-anchor="middle" textLength="117" lengthAdjust="spacingAndGlyphs"  fill="#2b2c2e" stroke="#2b2c2e" stroke-width="0.45">Dommartemont</text>
<text x="881" y="416" font-size="16.5" text-anchor="middle" textLength="76" lengthAdjust="spacingAndGlyphs"  fill="#f7f8f9" stroke="#f7f8f9" stroke-width="3.200" stroke-linejoin="round">Saint-Max</text>
<text x="881" y="416" font-size="16.5" text-anchor="middle" textLength="76" lengthAdjust="spacingAndGlyphs"  fill="#2b2c2e" stroke="#2b2c2e" stroke-width="0.45">Saint-Max</text>
<text x="1015" y="390" font-size="16.5" text-anchor="start" textLength="48" lengthAdjust="spacingAndGlyphs"  fill="#f7f8f9" stroke="#f7f8f9" stroke-width="3.200" stroke-linejoin="round">Essey</text>
<text x="1015" y="390" font-size="16.5" text-anchor="start" textLength="48" lengthAdjust="spacingAndGlyphs"  fill="#2b2c2e" stroke="#2b2c2e" stroke-width="0.45">Essey</text>
<text x="991.5" y="275" font-size="12.5" text-anchor="start" textLength="22" lengthAdjust="spacingAndGlyphs"  fill="#f7f8f9" stroke="#f7f8f9" stroke-width="3.200" stroke-linejoin="round">Che</text>
<text x="991.5" y="275" font-size="12.5" text-anchor="start" textLength="22" lengthAdjust="spacingAndGlyphs"  fill="#2f3133">Che</text>
<text x="505" y="640" font-size="16.5" text-anchor="middle" textLength="45" lengthAdjust="spacingAndGlyphs"  fill="#f7f8f9" stroke="#f7f8f9" stroke-width="3.200" stroke-linejoin="round">Laxou</text>
<text x="505" y="640" font-size="16.5" text-anchor="middle" textLength="45" lengthAdjust="spacingAndGlyphs"  fill="#2b2c2e" stroke="#2b2c2e" stroke-width="0.45">Laxou</text>
<text x="513" y="757" font-size="16.5" text-anchor="middle" textLength="127" lengthAdjust="spacingAndGlyphs"  fill="#f7f8f9" stroke="#f7f8f9" stroke-width="3.200" stroke-linejoin="round">Villers-lès-Nancy</text>
<text x="513" y="757" font-size="16.5" text-anchor="middle" textLength="127" lengthAdjust="spacingAndGlyphs"  fill="#2b2c2e" stroke="#2b2c2e" stroke-width="0.45">Villers-lès-Nancy</text>
<text x="985" y="648" font-size="16.5" text-anchor="middle" textLength="79" lengthAdjust="spacingAndGlyphs"  fill="#f7f8f9" stroke="#f7f8f9" stroke-width="3.200" stroke-linejoin="round">Tomblaine</text>
<text x="985" y="648" font-size="16.5" text-anchor="middle" textLength="79" lengthAdjust="spacingAndGlyphs"  fill="#2b2c2e" stroke="#2b2c2e" stroke-width="0.45">Tomblaine</text>
<text x="848" y="745" font-size="16.5" text-anchor="middle" textLength="159" lengthAdjust="spacingAndGlyphs"  fill="#f7f8f9" stroke="#f7f8f9" stroke-width="3.200" stroke-linejoin="round">Jarville-la-Malgrange</text>
<text x="848" y="745" font-size="16.5" text-anchor="middle" textLength="159" lengthAdjust="spacingAndGlyphs"  fill="#2b2c2e" stroke="#2b2c2e" stroke-width="0.45">Jarville-la-Malgrange</text>
<text x="730.5" y="560.5" font-size="22" text-anchor="middle" font-weight="bold" textLength="62" lengthAdjust="spacingAndGlyphs"  fill="#f7f8f9" stroke="#f7f8f9" stroke-width="3.200" stroke-linejoin="round">Nancy</text>
<text x="730.5" y="560.5" font-size="22" text-anchor="middle" font-weight="bold" textLength="62" lengthAdjust="spacingAndGlyphs"  fill="#1f2022">Nancy</text>
<text x="439" y="474" font-size="12" text-anchor="middle" textLength="120" lengthAdjust="spacingAndGlyphs"  fill="#f7f8f9" stroke="#f7f8f9" stroke-width="3.200" stroke-linejoin="round">HAUT-DU-LIÈVRE</text>
<text x="439" y="474" font-size="12" text-anchor="middle" textLength="120" lengthAdjust="spacingAndGlyphs"  fill="#3a3c3e" stroke="#3a3c3e" stroke-width="0.2">HAUT-DU-LIÈVRE</text>
<text x="547" y="491" font-size="12" text-anchor="middle" textLength="101" lengthAdjust="spacingAndGlyphs"  fill="#f7f8f9" stroke="#f7f8f9" stroke-width="3.200" stroke-linejoin="round">BOUDONVILLE</text>
<text x="547" y="491" font-size="12" text-anchor="middle" textLength="101" lengthAdjust="spacingAndGlyphs"  fill="#3a3c3e" stroke="#3a3c3e" stroke-width="0.2">BOUDONVILLE</text>
<text x="547" y="504" font-size="12" text-anchor="middle" textLength="88" lengthAdjust="spacingAndGlyphs"  fill="#f7f8f9" stroke="#f7f8f9" stroke-width="3.200" stroke-linejoin="round">- SCARPONE</text>
<text x="547" y="504" font-size="12" text-anchor="middle" textLength="88" lengthAdjust="spacingAndGlyphs"  fill="#3a3c3e" stroke="#3a3c3e" stroke-width="0.2">- SCARPONE</text>
<text x="547" y="517" font-size="12" text-anchor="middle" textLength="97" lengthAdjust="spacingAndGlyphs"  fill="#f7f8f9" stroke="#f7f8f9" stroke-width="3.200" stroke-linejoin="round">- LIBÉRATION</text>
<text x="547" y="517" font-size="12" text-anchor="middle" textLength="97" lengthAdjust="spacingAndGlyphs"  fill="#3a3c3e" stroke="#3a3c3e" stroke-width="0.2">- LIBÉRATION</text>
<text x="396" y="711" font-size="12" text-anchor="middle" textLength="80" lengthAdjust="spacingAndGlyphs"  fill="#f7f8f9" stroke="#f7f8f9" stroke-width="3.200" stroke-linejoin="round">MARÉVILLE</text>
<text x="396" y="711" font-size="12" text-anchor="middle" textLength="80" lengthAdjust="spacingAndGlyphs"  fill="#3a3c3e" stroke="#3a3c3e" stroke-width="0.2">MARÉVILLE</text>
<text x="697" y="695" font-size="12" text-anchor="middle" textLength="67" lengthAdjust="spacingAndGlyphs"  fill="#f7f8f9" stroke="#f7f8f9" stroke-width="3.200" stroke-linejoin="round">SAURUPT</text>
<text x="697" y="695" font-size="12" text-anchor="middle" textLength="67" lengthAdjust="spacingAndGlyphs"  fill="#3a3c3e" stroke="#3a3c3e" stroke-width="0.2">SAURUPT</text>
<text x="638" y="648" font-size="12" text-anchor="middle" textLength="110" lengthAdjust="spacingAndGlyphs"  fill="#f7f8f9" stroke="#f7f8f9" stroke-width="3.200" stroke-linejoin="round">HAUSSONVILLE</text>
<text x="638" y="648" font-size="12" text-anchor="middle" textLength="110" lengthAdjust="spacingAndGlyphs"  fill="#3a3c3e" stroke="#3a3c3e" stroke-width="0.2">HAUSSONVILLE</text>
<text x="645" y="661" font-size="12" text-anchor="middle" textLength="80" lengthAdjust="spacingAndGlyphs"  fill="#f7f8f9" stroke="#f7f8f9" stroke-width="3.200" stroke-linejoin="round">- BLANDAN</text>
<text x="645" y="661" font-size="12" text-anchor="middle" textLength="80" lengthAdjust="spacingAndGlyphs"  fill="#3a3c3e" stroke="#3a3c3e" stroke-width="0.2">- BLANDAN</text>
<text x="640" y="674" font-size="12" text-anchor="middle" textLength="58" lengthAdjust="spacingAndGlyphs"  fill="#f7f8f9" stroke="#f7f8f9" stroke-width="3.200" stroke-linejoin="round">- DONOP</text>
<text x="640" y="674" font-size="12" text-anchor="middle" textLength="58" lengthAdjust="spacingAndGlyphs"  fill="#3a3c3e" stroke="#3a3c3e" stroke-width="0.2">- DONOP</text>
<text x="802" y="514" font-size="12" text-anchor="middle" textLength="66" lengthAdjust="spacingAndGlyphs"  fill="#f7f8f9" stroke="#f7f8f9" stroke-width="3.200" stroke-linejoin="round">RIVES DE</text>
<text x="802" y="514" font-size="12" text-anchor="middle" textLength="66" lengthAdjust="spacingAndGlyphs"  fill="#3a3c3e" stroke="#3a3c3e" stroke-width="0.2">RIVES DE</text>
<text x="802" y="527" font-size="12" text-anchor="middle" textLength="68" lengthAdjust="spacingAndGlyphs"  fill="#f7f8f9" stroke="#f7f8f9" stroke-width="3.200" stroke-linejoin="round">MEURTHE</text>
<text x="802" y="527" font-size="12" text-anchor="middle" textLength="68" lengthAdjust="spacingAndGlyphs"  fill="#3a3c3e" stroke="#3a3c3e" stroke-width="0.2">MEURTHE</text>
<text x="828" y="674" font-size="12" text-anchor="middle" textLength="102" lengthAdjust="spacingAndGlyphs"  fill="#f7f8f9" stroke="#f7f8f9" stroke-width="3.200" stroke-linejoin="round">SAINT-PIERRE</text>
<text x="828" y="674" font-size="12" text-anchor="middle" textLength="102" lengthAdjust="spacingAndGlyphs"  fill="#3a3c3e" stroke="#3a3c3e" stroke-width="0.2">SAINT-PIERRE</text>
<text x="828" y="687" font-size="12" text-anchor="middle" textLength="80" lengthAdjust="spacingAndGlyphs"  fill="#f7f8f9" stroke="#f7f8f9" stroke-width="3.200" stroke-linejoin="round">- RENÉ II -</text>
<text x="828" y="687" font-size="12" text-anchor="middle" textLength="80" lengthAdjust="spacingAndGlyphs"  fill="#3a3c3e" stroke="#3a3c3e" stroke-width="0.2">- RENÉ II -</text>
<text x="828" y="701" font-size="12" text-anchor="middle" textLength="102" lengthAdjust="spacingAndGlyphs"  fill="#f7f8f9" stroke="#f7f8f9" stroke-width="3.200" stroke-linejoin="round">MARCEL BROT</text>
<text x="828" y="701" font-size="12" text-anchor="middle" textLength="102" lengthAdjust="spacingAndGlyphs"  fill="#3a3c3e" stroke="#3a3c3e" stroke-width="0.2">MARCEL BROT</text>
<text x="924" y="695" font-size="12" text-anchor="start" textLength="105" lengthAdjust="spacingAndGlyphs"  fill="#f7f8f9" stroke="#f7f8f9" stroke-width="3.200" stroke-linejoin="round">LES ENSANGES</text>
<text x="924" y="695" font-size="12" text-anchor="start" textLength="105" lengthAdjust="spacingAndGlyphs"  fill="#3a3c3e" stroke="#3a3c3e" stroke-width="0.2">LES ENSANGES</text>
<text x="575" y="412" font-size="12.5" text-anchor="middle" textLength="90" lengthAdjust="spacingAndGlyphs" transform="rotate(78 575 412)"  fill="#f7f8f9" stroke="#f7f8f9" stroke-width="3.200" stroke-linejoin="round">Bd de Scarpone</text>
<text x="575" y="412" font-size="12.5" text-anchor="middle" textLength="90" lengthAdjust="spacingAndGlyphs" transform="rotate(78 575 412)"  fill="#2f3133">Bd de Scarpone</text>
<text x="538" y="576" font-size="12.5" text-anchor="middle" textLength="93" lengthAdjust="spacingAndGlyphs" transform="rotate(18 538 576)"  fill="#f7f8f9" stroke="#f7f8f9" stroke-width="3.200" stroke-linejoin="round">Av. de Boufflers</text>
<text x="538" y="576" font-size="12.5" text-anchor="middle" textLength="93" lengthAdjust="spacingAndGlyphs" transform="rotate(18 538 576)"  fill="#2f3133">Av. de Boufflers</text>
<text x="908" y="460" font-size="12.5" text-anchor="middle" textLength="60" lengthAdjust="spacingAndGlyphs" transform="rotate(-28 908 460)"  fill="#f7f8f9" stroke="#f7f8f9" stroke-width="3.200" stroke-linejoin="round">Av. Carnot</text>
<text x="908" y="460" font-size="12.5" text-anchor="middle" textLength="60" lengthAdjust="spacingAndGlyphs" transform="rotate(-28 908 460)"  fill="#2f3133">Av. Carnot</text>
<text x="966" y="505" font-size="12.5" text-anchor="middle" textLength="117" lengthAdjust="spacingAndGlyphs" transform="rotate(-41 966 505)"  fill="#f7f8f9" stroke="#f7f8f9" stroke-width="3.200" stroke-linejoin="round">Rue de la Fraternité</text>
<text x="966" y="505" font-size="12.5" text-anchor="middle" textLength="117" lengthAdjust="spacingAndGlyphs" transform="rotate(-41 966 505)"  fill="#2f3133">Rue de la Fraternité</text>
<text x="1012" y="458" font-size="12.5" text-anchor="start" textLength="60" lengthAdjust="spacingAndGlyphs" transform="rotate(-35 1012 458)"  fill="#f7f8f9" stroke="#f7f8f9" stroke-width="3.200" stroke-linejoin="round">Av. de Brig</text>
<text x="1012" y="458" font-size="12.5" text-anchor="start" textLength="60" lengthAdjust="spacingAndGlyphs" transform="rotate(-35 1012 458)"  fill="#2f3133">Av. de Brig</text>
<text x="364" y="582" font-size="12.5" text-anchor="start" textLength="40" lengthAdjust="spacingAndGlyphs" transform="rotate(-80 364 582)"  fill="#f7f8f9" stroke="#f7f8f9" stroke-width="3.200" stroke-linejoin="round">Av. des</text>
<text x="364" y="582" font-size="12.5" text-anchor="start" textLength="40" lengthAdjust="spacingAndGlyphs" transform="rotate(-80 364 582)"  fill="#2f3133">Av. des</text>
<text x="354" y="536" font-size="12.5" text-anchor="start" textLength="70" lengthAdjust="spacingAndGlyphs" transform="rotate(-50 354 536)"  fill="#f7f8f9" stroke="#f7f8f9" stroke-width="3.200" stroke-linejoin="round">Quatre Vents</text>
<text x="354" y="536" font-size="12.5" text-anchor="start" textLength="70" lengthAdjust="spacingAndGlyphs" transform="rotate(-50 354 536)"  fill="#2f3133">Quatre Vents</text>
<text x="985" y="769" font-size="12.5" text-anchor="middle" textLength="62" lengthAdjust="spacingAndGlyphs" transform="rotate(40 985 769)" font-style="italic"  fill="#f7f8f9" stroke="#f7f8f9" stroke-width="3.200" stroke-linejoin="round">La Meurthe</text>
<text x="985" y="769" font-size="12.5" text-anchor="middle" textLength="62" lengthAdjust="spacingAndGlyphs" transform="rotate(40 985 769)" font-style="italic"  fill="#4a8fb5">La Meurthe</text>
<rect x="695.0" y="240" width="26" height="14" rx="1.500" fill="#fbd24a" stroke="#e2b93b" stroke-width=".800"/><text x="708" y="251" font-size="10.500" text-anchor="middle" fill="#3a3a2a">D32</text>
<rect x="713.0" y="330" width="26" height="14" rx="1.500" fill="#fbd24a" stroke="#e2b93b" stroke-width=".800"/><text x="726" y="341" font-size="10.500" text-anchor="middle" fill="#3a3a2a">D32</text>
<rect x="621.0" y="441" width="32" height="14" rx="1.500" fill="#fbd24a" stroke="#e2b93b" stroke-width=".800"/><text x="637" y="452" font-size="10.500" text-anchor="middle" fill="#3a3a2a">D657</text>
<rect x="814.0" y="441" width="32" height="14" rx="1.500" fill="#fbd24a" stroke="#e2b93b" stroke-width=".800"/><text x="830" y="452" font-size="10.500" text-anchor="middle" fill="#3a3a2a">D32A</text>
<rect x="996.0" y="406" width="38" height="14" rx="1.500" fill="#fbd24a" stroke="#e2b93b" stroke-width=".800"/><text x="1015" y="417" font-size="10.500" text-anchor="middle" fill="#3a3a2a">D2074</text>
<rect x="425.0" y="500" width="32" height="14" rx="1.500" fill="#fbd24a" stroke="#e2b93b" stroke-width=".800"/><text x="441" y="511" font-size="10.500" text-anchor="middle" fill="#3a3a2a">D400</text>
<rect x="453.0" y="654" width="26" height="14" rx="1.500" fill="#fbd24a" stroke="#e2b93b" stroke-width=".800"/><text x="466" y="665" font-size="10.500" text-anchor="middle" fill="#3a3a2a">D39</text>
<rect x="543.0" y="691" width="26" height="14" rx="1.500" fill="#fbd24a" stroke="#e2b93b" stroke-width=".800"/><text x="556" y="702" font-size="10.500" text-anchor="middle" fill="#3a3a2a">D92</text>
<rect x="928.0" y="575" width="32" height="14" rx="1.500" fill="#fbd24a" stroke="#e2b93b" stroke-width=".800"/><text x="944" y="586" font-size="10.500" text-anchor="middle" fill="#3a3a2a">D220</text>
<rect x="849.0" y="754" width="32" height="14" rx="1.500" fill="#fbd24a" stroke="#e2b93b" stroke-width=".800"/><text x="865" y="765" font-size="10.500" text-anchor="middle" fill="#3a3a2a">D400</text>
<rect x="1014.0" y="618" width="32" height="14" rx="1.500" fill="#4a78c9" stroke="#4a78c9" stroke-width=".800"/><text x="1030" y="629" font-size="10.500" text-anchor="middle" fill="#fff" font-weight="bold">M674</text>
<rect x="845" y="780" width="16" height="16" rx="4" fill="#6d7a8c" stroke="#fff" stroke-width="1.500"/><rect x="849" y="783.500" width="8" height="7" rx="1.500" fill="#fff"/><path d="M850 793L849 795M856 793L857 795" stroke="#fff" stroke-width="1.200"/>
<g fill="none" stroke-width="2.800" stroke-linejoin="round" stroke-linecap="round">
<path d="M624.700 418.400L634.800 450.400L595.500 469.500L598.300 476L603.700 481.400L608.300 509" stroke="#9a7be3"/>
<path d="M634 423L666 440.500" stroke="#9a7be3"/>
<path d="M675 459L662 489L680 530L688 548" stroke="#9a7be3"/>
<path d="M611 548L611 560M613 612V626H619V612M655 570H668V580H655" stroke="#9a7be3"/>
<path d="M630 612V628H640M636 600V628M666 637L690 631" stroke="#4fb592"/>
<path d="M758 565L777 559M754 602L796 620L804 620" stroke="#d648c6"/>
<path d="M686 575L696 590L704 617.500L693.300 627.700L688 623L679 620.800L667.600 627L640 636.800L623 639" stroke="#4a6cdb"/>
<path d="M704 609.400L719 604.800L721.200 612.800L705.300 618L727 611L742 606" stroke="#4a6cdb"/>
<path d="M693.300 627.700L690.400 632.200L695 647L663 666.500L657.500 652.500L639.500 645L624 654L601.500 664L602.600 672.200L610.500 670L607 661" stroke="#4a6cdb"/>
<path d="M639.500 645L654 647L657.500 652.500M623 639L641.400 635.600" stroke="#4a6cdb"/>
<path d="M663 639L692.700 630" stroke="#4fb592"/>
<path d="M754 599L790 581M700 608L729 610L740 620L782 656L817 692L827 684M700 622L729 610" stroke="#4a6cdb"/>
<path d="M806 621L811 641" stroke="#4a6cdb" stroke-dasharray="1 4.500"/>
</g>
<path d="M0 0C-10-8-14-13-14-21.500A14 14 0 1 1 14-21.500C14-13 10-8 0 0Z" transform="translate(650.3 426.9)" fill="#9b78e8" stroke="#15152a" stroke-width="1.200"/>
<text x="650.3" y="414.6" font-size="17" font-weight="bold" text-anchor="middle" fill="#fff">21</text>
<path d="M0 0C-10-8-14-13-14-21.500A14 14 0 1 1 14-21.500C14-13 10-8 0 0Z" transform="translate(636.6 424.2)" fill="#9b78e8" stroke="#15152a" stroke-width="1.200"/>
<text x="636.6" y="411.9" font-size="17" font-weight="bold" text-anchor="middle" fill="#fff">22</text>
<path d="M0 0C-10-8-14-13-14-21.500A14 14 0 1 1 14-21.500C14-13 10-8 0 0Z" transform="translate(624.7 418.7)" fill="#9b78e8" stroke="#15152a" stroke-width="1.200"/>
<g transform="translate(624.7 422.5)" fill="none" stroke="#fff" stroke-width="1.300" stroke-linejoin="round"><path d="M0-29.500L6.500-26.300L0-23.100L-6.500-26.300Z" fill="#fff" fill-opacity=".55"/><path d="M-6.500-23.300L0-20.100L6.500-23.300M-6.500-20.300L0-17.100L6.500-20.300"/></g>
<circle cx="635.4" cy="386.0" r="8" fill="#e0534f"/><text x="635.4" y="390.2" font-size="12" font-weight="bold" text-anchor="middle" fill="#fff">2</text>
<path d="M0 0C-10-8-14-13-14-21.500A14 14 0 1 1 14-21.500C14-13 10-8 0 0Z" transform="translate(677.7 458.0)" fill="#9b78e8" stroke="#15152a" stroke-width="1.200"/>
<text x="677.7" y="445.7" font-size="17" font-weight="bold" text-anchor="middle" fill="#fff">20</text>
<path d="M0 0C-2.500-5.500-13-12-13-24.500A13 13 0 1 1 13-24.500C13-12 2.500-5.500 0 0Z" transform="translate(610.500 548)" fill="#a288e8"/><circle cx="610.500" cy="523" r="8.500" fill="#fff"/>
<path d="M606 525V522.500C606 521 607 520.500 608 520.500H613C614 520.500 615 521 615 522.500V525M605 527.500V525H616V527.500" fill="none" stroke="#a288e8" stroke-width="1.400"/>
<path d="M0 0C-10-8-14-13-14-21.500A14 14 0 1 1 14-21.500C14-13 10-8 0 0Z" transform="translate(643.9 565.2)" fill="#50b694" stroke="#15152a" stroke-width="1.200"/>
<text x="643.9" y="552.9" font-size="17" font-weight="bold" text-anchor="middle" fill="#fff">13</text>
<path d="M0 0C-10-8-14-13-14-21.500A14 14 0 1 1 14-21.500C14-13 10-8 0 0Z" transform="translate(666.2 560.6)" fill="#9b78e8" stroke="#15152a" stroke-width="1.200"/>
<text x="666.2" y="548.3" font-size="17" font-weight="bold" text-anchor="middle" fill="#fff">18</text>
<path d="M0 0C-10-8-14-13-14-21.500A14 14 0 1 1 14-21.500C14-13 10-8 0 0Z" transform="translate(685 574.3)" fill="#4b70e3" stroke="#15152a" stroke-width="1.200"/>
<text x="685" y="562.0" font-size="17" font-weight="bold" text-anchor="middle" fill="#fff">26</text>
<path d="M0 0C-10-8-14-13-14-21.500A14 14 0 1 1 14-21.500C14-13 10-8 0 0Z" transform="translate(632.6 576.1)" fill="#9b78e8" stroke="#15152a" stroke-width="1.200"/>
<text x="632.6" y="563.8" font-size="17" font-weight="bold" text-anchor="middle" fill="#fff">8</text>
<path d="M0 0C-10-8-14-13-14-21.500A14 14 0 1 1 14-21.500C14-13 10-8 0 0Z" transform="translate(634.8 614.5)" fill="#50b694" stroke="#15152a" stroke-width="1.200"/>
<text x="634.8" y="602.2" font-size="17" font-weight="bold" text-anchor="middle" fill="#fff">15</text>
<path d="M0 0C-10-8-14-13-14-21.500A14 14 0 1 1 14-21.500C14-13 10-8 0 0Z" transform="translate(606 607.5)" fill="#9b78e8" stroke="#15152a" stroke-width="1.200"/>
<path d="M0 0C-10-8-14-13-14-21.500A14 14 0 1 1 14-21.500C14-13 10-8 0 0Z" transform="translate(609 609.5)" fill="#9b78e8" stroke="#15152a" stroke-width="1.200"/>
<path d="M0 0C-10-8-14-13-14-21.500A14 14 0 1 1 14-21.500C14-13 10-8 0 0Z" transform="translate(611 610.5)" fill="#9b78e8" stroke="#15152a" stroke-width="1.200"/>
<path d="M0 0C-10-8-14-13-14-21.500A14 14 0 1 1 14-21.500C14-13 10-8 0 0Z" transform="translate(599.7 591.6)" fill="#9b78e8" stroke="#15152a" stroke-width="1.200"/>
<g transform="translate(599.7 595.4)" fill="none" stroke="#fff" stroke-width="1.300" stroke-linejoin="round"><path d="M0-29.500L6.500-26.300L0-23.100L-6.500-26.300Z" fill="#fff" fill-opacity=".55"/><path d="M-6.500-23.300L0-20.100L6.500-23.300M-6.500-20.300L0-17.100L6.500-20.300"/></g>
<circle cx="610.4" cy="558.9" r="8" fill="#e0534f"/><text x="610.4" y="563.1" font-size="12" font-weight="bold" text-anchor="middle" fill="#fff">2</text>
<path d="M0 0C-10-8-14-13-14-21.500A14 14 0 1 1 14-21.500C14-13 10-8 0 0Z" transform="translate(649 595.5)" fill="#9b78e8" stroke="#15152a" stroke-width="1.200"/>
<path d="M0 0C-10-8-14-13-14-21.500A14 14 0 1 1 14-21.500C14-13 10-8 0 0Z" transform="translate(643 594.4)" fill="#9b78e8" stroke="#15152a" stroke-width="1.200"/>
<g transform="translate(643 598.2)" fill="none" stroke="#fff" stroke-width="1.300" stroke-linejoin="round"><path d="M0-29.500L6.500-26.300L0-23.100L-6.500-26.300Z" fill="#fff" fill-opacity=".55"/><path d="M-6.500-23.300L0-20.100L6.500-23.300M-6.500-20.300L0-17.100L6.500-20.300"/></g>
<circle cx="653.7" cy="561.7" r="8" fill="#e0534f"/><text x="653.7" y="565.9" font-size="12" font-weight="bold" text-anchor="middle" fill="#fff">2</text>
<path d="M0 0C-10-8-14-13-14-21.500A14 14 0 1 1 14-21.500C14-13 10-8 0 0Z" transform="translate(612.9 611.7)" fill="#9b78e8" stroke="#15152a" stroke-width="1.200"/>
<g transform="translate(612.9 615.5)" fill="none" stroke="#fff" stroke-width="1.300" stroke-linejoin="round"><path d="M0-29.500L6.500-26.300L0-23.100L-6.500-26.300Z" fill="#fff" fill-opacity=".55"/><path d="M-6.500-23.300L0-20.100L6.500-23.300M-6.500-20.300L0-17.100L6.500-20.300"/></g>
<circle cx="623.6" cy="579.0" r="8" fill="#e0534f"/><text x="623.6" y="583.2" font-size="12" font-weight="bold" text-anchor="middle" fill="#fff">2</text>
<path d="M0 0C-10-8-14-13-14-21.500A14 14 0 1 1 14-21.500C14-13 10-8 0 0Z" transform="translate(644.8 625.5)" fill="#50b694" stroke="#15152a" stroke-width="1.200"/>
<text x="644.8" y="613.2" font-size="17" font-weight="bold" text-anchor="middle" fill="#fff">14</text>
<path d="M0 0C-10-8-14-13-14-21.500A14 14 0 1 1 14-21.500C14-13 10-8 0 0Z" transform="translate(654 645.5)" fill="#4b70e3" stroke="#15152a" stroke-width="1.200"/>
<text x="654" y="633.2" font-size="17" font-weight="bold" text-anchor="middle" fill="#fff">1</text>
<path d="M0 0C-10-8-14-13-14-21.500A14 14 0 1 1 14-21.500C14-13 10-8 0 0Z" transform="translate(707.9 533.2)" fill="#d744c9" stroke="#15152a" stroke-width="1.200"/>
<path d="M0 0C-10-8-14-13-14-21.500A14 14 0 1 1 14-21.500C14-13 10-8 0 0Z" transform="translate(706 543.2)" fill="#50b694" stroke="#15152a" stroke-width="1.200"/>
<path d="M0 0C-10-8-14-13-14-21.500A14 14 0 1 1 14-21.500C14-13 10-8 0 0Z" transform="translate(719 543.5)" fill="#50b694" stroke="#15152a" stroke-width="1.200"/>
<text x="719" y="531.2" font-size="17" font-weight="bold" text-anchor="middle" fill="#fff">4</text>
<path d="M0 0C-10-8-14-13-14-21.500A14 14 0 1 1 14-21.500C14-13 10-8 0 0Z" transform="translate(704.2 572.5)" fill="#9b78e8" stroke="#15152a" stroke-width="1.200"/>
<text x="704.2" y="560.2" font-size="17" font-weight="bold" text-anchor="middle" fill="#fff">19</text>
<path d="M0 0C-10-8-14-13-14-21.500A14 14 0 1 1 14-21.500C14-13 10-8 0 0Z" transform="translate(725.2 557.9)" fill="#50b694" stroke="#15152a" stroke-width="1.200"/>
<g transform="translate(725.2 561.7)" fill="none" stroke="#fff" stroke-width="1.300" stroke-linejoin="round"><path d="M0-29.500L6.500-26.300L0-23.100L-6.500-26.300Z" fill="#fff" fill-opacity=".55"/><path d="M-6.500-23.300L0-20.100L6.500-23.300M-6.500-20.300L0-17.100L6.500-20.300"/></g>
<circle cx="735.9" cy="525.2" r="8" fill="#e0534f"/><text x="735.9" y="529.4" font-size="12" font-weight="bold" text-anchor="middle" fill="#fff">7</text>
<path d="M0 0C-10-8-14-13-14-21.500A14 14 0 1 1 14-21.500C14-13 10-8 0 0Z" transform="translate(724 599.5)" fill="#4b70e3" stroke="#15152a" stroke-width="1.200"/>
<path d="M0 0C-10-8-14-13-14-21.500A14 14 0 1 1 14-21.500C14-13 10-8 0 0Z" transform="translate(720 607.5)" fill="#4b70e3" stroke="#15152a" stroke-width="1.200"/>
<circle cx="730.500" cy="558.500" r="8" fill="#e0534f"/><path d="M727 553.500A6 6 0 0 1 734 557" fill="none" stroke="#f3b0a8" stroke-width="1.200"/>
<path d="M0 0C-10-8-14-13-14-21.500A14 14 0 1 1 14-21.500C14-13 10-8 0 0Z" transform="translate(753.4 595.0)" fill="#4b70e3" stroke="#15152a" stroke-width="1.200"/>
<text x="753.4" y="582.7" font-size="17" font-weight="bold" text-anchor="middle" fill="#fff">3</text>
<path d="M0 0C-10-8-14-13-14-21.500A14 14 0 1 1 14-21.500C14-13 10-8 0 0Z" transform="translate(714.4 595.5)" fill="#4b70e3" stroke="#15152a" stroke-width="1.200"/>
<g transform="translate(714.4 599.3)" fill="none" stroke="#fff" stroke-width="1.300" stroke-linejoin="round"><path d="M0-29.500L6.500-26.300L0-23.100L-6.500-26.300Z" fill="#fff" fill-opacity=".55"/><path d="M-6.500-23.300L0-20.100L6.500-23.300M-6.500-20.300L0-17.100L6.500-20.300"/></g>
<circle cx="725.1" cy="562.8" r="8" fill="#e0534f"/><text x="725.1" y="567.0" font-size="12" font-weight="bold" text-anchor="middle" fill="#fff">2</text>
<path d="M0 0C-10-8-14-13-14-21.500A14 14 0 1 1 14-21.500C14-13 10-8 0 0Z" transform="translate(740 618.5)" fill="#4b70e3" stroke="#15152a" stroke-width="1.200"/>
<g transform="translate(740 622.3)" fill="none" stroke="#fff" stroke-width="1.300" stroke-linejoin="round"><path d="M0-29.500L6.500-26.300L0-23.100L-6.500-26.300Z" fill="#fff" fill-opacity=".55"/><path d="M-6.500-23.300L0-20.100L6.500-23.300M-6.500-20.300L0-17.100L6.500-20.300"/></g>
<circle cx="750.7" cy="585.8" r="8" fill="#e0534f"/><text x="750.7" y="590.0" font-size="12" font-weight="bold" text-anchor="middle" fill="#fff">3</text>
<path d="M0 0C-10-8-14-13-14-21.500A14 14 0 1 1 14-21.500C14-13 10-8 0 0Z" transform="translate(786.3 560.0)" fill="#d744c9" stroke="#15152a" stroke-width="1.200"/>
<path d="M0 0C-10-8-14-13-14-21.500A14 14 0 1 1 14-21.500C14-13 10-8 0 0Z" transform="translate(790.4 570.3)" fill="#4b70e3" stroke="#15152a" stroke-width="1.200"/>
<path d="M0 0C-10-8-14-13-14-21.500A14 14 0 1 1 14-21.500C14-13 10-8 0 0Z" transform="translate(806.8 568.3)" fill="#4b70e3" stroke="#15152a" stroke-width="1.200"/>
<path d="M0 0C-10-8-14-13-14-21.500A14 14 0 1 1 14-21.500C14-13 10-8 0 0Z" transform="translate(797 572.5)" fill="#4b70e3" stroke="#15152a" stroke-width="1.200"/>
<path d="M0 0C-10-8-14-13-14-21.500A14 14 0 1 1 14-21.500C14-13 10-8 0 0Z" transform="translate(793.9 582.6)" fill="#4b70e3" stroke="#15152a" stroke-width="1.200"/>
<text x="793.9" y="570.3" font-size="17" font-weight="bold" text-anchor="middle" fill="#fff">9</text>
<path d="M0 0C-10-8-14-13-14-21.500A14 14 0 1 1 14-21.500C14-13 10-8 0 0Z" transform="translate(803.7 619.5)" fill="#d744c9" stroke="#15152a" stroke-width="1.200"/>
<path d="M0 0C-10-8-14-13-14-21.500A14 14 0 1 1 14-21.500C14-13 10-8 0 0Z" transform="translate(802.1 610.4)" fill="#d744c9" stroke="#15152a" stroke-width="1.200"/>
<text x="802.1" y="598.1" font-size="17" font-weight="bold" text-anchor="middle" fill="#fff">2</text>
<path d="M0 0C-10-8-14-13-14-21.500A14 14 0 1 1 14-21.500C14-13 10-8 0 0Z" transform="translate(783 657.5)" fill="#4b70e3" stroke="#15152a" stroke-width="1.200"/>
<path d="M0 0C-10-8-14-13-14-21.500A14 14 0 1 1 14-21.500C14-13 10-8 0 0Z" transform="translate(780.1 651.4)" fill="#4b70e3" stroke="#15152a" stroke-width="1.200"/>
<text x="780.1" y="639.1" font-size="17" font-weight="bold" text-anchor="middle" fill="#fff">16</text>
<path d="M0 0C-10-8-14-13-14-21.500A14 14 0 1 1 14-21.500C14-13 10-8 0 0Z" transform="translate(827 659.5)" fill="#4b70e3" stroke="#15152a" stroke-width="1.200"/>
<path d="M0 0C-10-8-14-13-14-21.500A14 14 0 1 1 14-21.500C14-13 10-8 0 0Z" transform="translate(823 664.5)" fill="#4b70e3" stroke="#15152a" stroke-width="1.200"/>
<text x="823" y="652.2" font-size="17" font-weight="bold" text-anchor="middle" fill="#fff">11</text>
<path d="M0 0C-10-8-14-13-14-21.500A14 14 0 1 1 14-21.500C14-13 10-8 0 0Z" transform="translate(796.5 670.9)" fill="#4b70e3" stroke="#15152a" stroke-width="1.200"/>
<text x="796.5" y="658.6" font-size="17" font-weight="bold" text-anchor="middle" fill="#fff">14</text>
<path d="M0 0C-10-8-14-13-14-21.500A14 14 0 1 1 14-21.500C14-13 10-8 0 0Z" transform="translate(830.4 679.2)" fill="#4b70e3" stroke="#15152a" stroke-width="1.200"/>
<text x="830.4" y="666.9" font-size="17" font-weight="bold" text-anchor="middle" fill="#fff">2</text>
<path d="M0 0C-10-8-14-13-14-21.500A14 14 0 1 1 14-21.500C14-13 10-8 0 0Z" transform="translate(814 683.3)" fill="#4b70e3" stroke="#15152a" stroke-width="1.200"/>
<text x="814" y="671.0" font-size="17" font-weight="bold" text-anchor="middle" fill="#fff">13</text>
<path d="M609.700 636L621.800 643.200V657.800L609.700 665L597.600 657.800V643.200Z" fill="#2f53c4" stroke="#2f53c4" stroke-width="2.500" stroke-linejoin="round"/>
<path d="M609.700 642.500C606 642.500 604 645.200 604 648C604 652 609.700 658.800 609.700 658.800C609.700 658.800 615.400 652 615.400 648C615.400 645.200 613.400 642.500 609.700 642.500Z" fill="#dfe8ff"/><circle cx="609.700" cy="648" r="2.100" fill="#2f53c4"/>
<rect x="1013" y="221" width="39" height="59" rx="1.500" fill="#2f69b0" style="filter:drop-shadow(0 2px 3px rgba(0,0,0,.18))"/>
<path d="M1028.800 240.500V261.500L1039.300 251Z" fill="none" stroke="#fff" stroke-width="1.900" stroke-linejoin="miter"/>
<rect x="992" y="647" width="48" height="97" rx="2" fill="#fff" style="filter:drop-shadow(0 1px 3px rgba(0,0,0,.3))"/>
<path d="M999 695.500H1033" stroke="#e6e6e6" stroke-width="1"/>
<path d="M1005.500 670.500H1025.500M1015.500 660.500V680.500M1005.500 720H1025.500" stroke="#666" stroke-width="2.200"/>
</svg></div>

<div id="side"></div>
<div id="subline"></div>
<!-- sidebar -->
<svg style="left:93px;top:234px" width="22" height="23" viewBox="0 0 22 23" fill="none" stroke="#1d1d1d" stroke-width="1.9">
<rect x="1.5" y="3.5" width="19" height="18" rx=".5"/><path d="M1.5 8H20.5M6 .5V5M16 .5V5"/><path d="M7 14.300L10 17L15.300 11.500" stroke-width="2"/></svg>
<span class="t" id="sAg" style="left:125px;top:238px;font-size:15px;letter-spacing:0.81px">Agenda</span>
<svg style="left:90px;top:286px" width="28" height="19" viewBox="0 0 28 19" fill="none" stroke="#1d1d1d" stroke-width="1.9" stroke-linejoin="miter">
<path d="M6 1.500H22L26.500 17.500H1.500Z"/><path d="M14 2V6.500M14 9V12.500M14 15V17.500"/></svg>
<span class="t" id="sRo" style="left:125px;top:288px;font-size:15px;letter-spacing:0.51px">Routes</span>
<div class="abs" style="left:85px;top:327px;width:248px;height:37px;border-radius:5px;background:#eef6fd"></div>
<svg style="left:93px;top:334px" width="23" height="23" viewBox="0 0 23 23" fill="none" stroke="#5b9ad8" stroke-width="1.600" stroke-linejoin="round">
<path d="M8 3.500L1 5.500V21.500L8 19.500L15 21.500L22 19.500V15M8 3.500V19.500M15 21.500V19"/>
<path d="M17 1C13.800 1 11.800 3.300 11.800 6C11.800 9.500 17 16.500 17 16.500C17 16.500 22.200 9.500 22.200 6C22.200 3.300 20.200 1 17 1Z" fill="#eef6fd"/><circle cx="17" cy="6.200" r="1.700"/></svg>
<span class="t" id="sMa" style="left:125px;top:338px;font-size:15px;color:#5b9ad8;letter-spacing:0.94px">Map</span>
<svg style="left:93px;top:386px" width="23" height="21" viewBox="0 0 23 21" fill="none" stroke="#1d1d1d" stroke-width="1.900">
<path d="M9.500 3H22.500M9.500 10.500H22.500M9.500 18H22.500"/><path d="M1 3L2.800 4.800L6 1.300M1 10.500L2.800 12.300L6 8.800M1 18L2.800 19.800L6 16.300" stroke-width="1.700"/></svg>
<span class="t" id="sLi" style="left:125px;top:388px;font-size:15px;letter-spacing:0.51px">List of work orders</span>

<!-- subheader -->
<div class="abs" style="left:328.500px;top:168.500px;width:33px;height:33px;border-radius:50%;background:#fff;box-shadow:0 2px 6px rgba(0,0,0,.26)"></div>
<svg style="left:339px;top:177px" width="11" height="16" viewBox="0 0 11 16" fill="none" stroke="#707070" stroke-width="1.500"><path d="M9.500 1.500L2.500 8L9.500 14.500"/></svg>
<span class="t" id="sTitle" style="left:384px;top:175px;font-size:20px;color:#d28050;letter-spacing:1.14px">Map's route view</span>
<div class="abs" style="left:568px;top:164px;width:273px;height:40px;border:1px solid #dcdcdc;border-radius:3px;background:#fafafa;box-shadow:0 1px 2px rgba(0,0,0,.06)"></div>
<div class="abs" style="left:569px;top:165px;width:56px;height:38px;background:#fff;border-right:1px solid #e4e4e4"></div>
<div class="abs" style="left:625px;top:165px;width:45px;height:38px;background:#f7f7f7;border-right:1px solid #e4e4e4"></div>
<div class="abs" style="left:797px;top:165px;width:43px;height:38px;background:#fff;border-left:1px solid #e4e4e4"></div>
<svg style="left:588px;top:173.500px" width="19" height="20" viewBox="0 0 19 20" fill="none" stroke="#222" stroke-width="1.500">
<rect x="1" y="2.600" width="16.800" height="16.200" rx=".800"/><path d="M1 6.300H17.800" stroke-width="1.500"/><path d="M4.800 .600V4M14 .600V4" stroke-width="1.700"/>
<g stroke="none" fill="#222"><rect x="6.45" y="8.75" width="1.700" height="1.700"/><rect x="9.75" y="8.75" width="1.700" height="1.700"/><rect x="13.05" y="8.75" width="1.700" height="1.700"/><rect x="3.15" y="11.75" width="1.700" height="1.700"/><rect x="6.45" y="11.75" width="1.700" height="1.700"/><rect x="9.75" y="11.75" width="1.700" height="1.700"/><rect x="13.05" y="11.75" width="1.700" height="1.700"/><rect x="3.15" y="14.75" width="1.700" height="1.700"/><rect x="6.45" y="14.75" width="1.700" height="1.700"/><rect x="9.75" y="14.75" width="1.700" height="1.700"/></g></svg>
<svg style="left:643px;top:179px" width="8" height="12" viewBox="0 0 8 12" fill="none" stroke="#aaa" stroke-width="1.400"><path d="M6.500 1L1.500 6L6.500 11"/></svg>
<span class="t" id="sDate" style="left:696px;top:177px;font-size:15px;color:#333;letter-spacing:0.03px">07/10/2025</span>
<svg style="left:816px;top:179px" width="8" height="12" viewBox="0 0 8 12" fill="none" stroke="#444" stroke-width="1.400"><path d="M1.500 1L6.500 6L1.500 11"/></svg>

<div class="abs" style="left:1408px;top:165px;width:195px;height:38px;border-radius:3px;background:#2f69b0;box-shadow:0 1px 3px rgba(0,0,0,.25)"></div>
<svg style="left:1423px;top:175px" width="22" height="21" viewBox="0 0 22 21" fill="none" stroke="#fff" stroke-width="1.500" stroke-linejoin="round" stroke-linecap="round">
<path d="M7 10.500C9 5.500 14 1.500 20.500 1C20 7.500 16 12.500 11 14.500Z"/><circle cx="14.500" cy="7" r="1.700"/>
<path d="M7.500 9.500L3.500 9.800L1.500 13L5.500 13M12 14L11.700 18L8.500 20L8.500 16"/><path d="M4.500 15C3 16 2.500 18 2.300 19.300C3.600 19.200 5.600 18.600 6.600 17.100"/></svg>
<span class="t" id="sReo" style="left:1459px;top:177px;font-size:15px;font-weight:bold;color:#fff;letter-spacing:0.13px">Reoptimize routes</span>
<div class="abs" style="left:1609.500px;top:165px;width:38px;height:38px;border-radius:50%;background:#2f69b0;box-shadow:0 1px 3px rgba(0,0,0,.25)"></div>
<svg style="left:1619.500px;top:175px" width="18" height="18" viewBox="0 0 18 18" fill="none" stroke="#fff" stroke-width="1.500"><path d="M9 1V17M1 9H17"/></svg>
<div class="abs" style="left:1657px;top:165px;width:38px;height:38px;border-radius:50%;background:#5dab5c;box-shadow:0 1px 3px rgba(0,0,0,.25)"></div>
<svg style="left:1665px;top:174px" width="23" height="20" viewBox="0 0 23 20" fill="none" stroke="#fff" stroke-width="1.500" stroke-linecap="round" stroke-linejoin="round">
<path d="M8 14.500H5.500C3 14.500 1 12.700 1 10.300C1 8 2.700 6.300 4.800 6.100C5.300 3.200 7.700 1 10.800 1C13.600 1 15.900 2.800 16.700 5.300C19.700 5.300 22 7.300 22 10C22 12.600 20 14.500 17.500 14.500H15"/>
<path d="M11.500 8.500V18.500M8.500 15.800L11.500 18.800L14.500 15.800"/></svg>
<div class="abs" style="left:1704.500px;top:165px;width:38px;height:38px;border-radius:50%;background:#5dab5c;box-shadow:0 1px 3px rgba(0,0,0,.25)"></div>
<svg style="left:1715.500px;top:173px" width="17" height="21" viewBox="0 0 17 21" fill="none" stroke="#fff" stroke-width="1.500">
<rect x="1" y="8.500" width="15" height="11.500" rx=".5"/><path d="M4.300 8.500V5.200C4.300 2.800 6 1 8.500 1C11 1 12.700 2.800 12.700 5.200V8.500"/></svg>
<div class="abs" style="left:1748px;top:165px;width:38px;height:38px;border-radius:50%;background:#2f69b0;box-shadow:0 1px 3px rgba(0,0,0,.25)"></div>
<svg style="left:1757px;top:177px" width="20" height="15" viewBox="0 0 20 15" fill="none" stroke="#fff" stroke-width="1.500" stroke-linejoin="round">
<rect x="1" y="1" width="18" height="13"/><path d="M1 1.500L10 9L19 1.500"/></svg>

<!-- panel -->
<div class="abs" style="left:1065px;top:230px;width:164px;height:38px;border-radius:3px;background:#f0f0f0"></div>
<span class="t" id="pFil" style="left:1076px;top:242px;font-size:15px;color:#777;letter-spacing:0.55px">Filter the display</span>
<svg style="left:1205px;top:246px" width="13" height="8" viewBox="0 0 13 8" fill="none" stroke="#777" stroke-width="1.300"><path d="M1 1L6.500 6.500L12 1"/></svg>
<div class="abs" style="left:1062px;top:278px;width:756px;height:71px;background:#2e68ae"></div>
<div class="abs" style="left:1095px;top:303px;width:21px;height:21px;border-radius:2px;background:#4a90e2"></div><svg style="left:1098px;top:308px" width="15" height="12" viewBox="0 0 15 12" fill="none" stroke="#fff" stroke-width="2.300"><path d="M1.300 6L5.500 10L13.700 1.500"/></svg>
<span class="t" id="pTech" style="left:1133px;top:306px;font-size:15px;font-weight:bold;color:#fff;letter-spacing:-0.11px">Technicians out of sector</span>
<svg style="left:1777px;top:305px" width="16" height="11" viewBox="0 0 16 11" fill="none" stroke="#fff" stroke-width="2.400"><path d="M1.500 9.500L8 3L14.500 9.500"/></svg>
<div class="abs" style="left:1064px;top:360px;width:753px;height:96px;border:1px solid #dcdcdc;border-radius:2px;background:#fff"></div>
<div class="abs" style="left:1065px;top:361px;width:751px;height:43px;background:#f0f0f0"></div>
<div class="abs" style="left:1076px;top:371px;width:21px;height:21px;border-radius:2px;background:#4a90e2"></div><svg style="left:1079px;top:376px" width="15" height="12" viewBox="0 0 15 12" fill="none" stroke="#fff" stroke-width="2.300"><path d="M1.300 6L5.500 10L13.700 1.500"/></svg>
<div class="abs" style="left:1108px;top:370px;width:24px;height:24px;border-radius:50%;background:#db45c8;border:1.500px solid #1a1a1a"></div>
<span class="t" id="cN0" style="left:1141px;top:375px;font-size:15px;color:#222;letter-spacing:0.35px">Alexandre Sanchez | v4</span>
<div class="abs" style="left:1632px;top:370px;width:98px;height:22px;border-radius:2px;background:#f4eddc"></div>
<span class="t" id="cB0" style="left:1639px;top:377px;font-size:11.500px;font-weight:bold;color:#f2cb58;letter-spacing:0.38px">NOT STARTED</span>
<div class="abs" style="left:1769.3px;top:380px;width:3px;height:3px;border-radius:50%;background:#111"></div>
<div class="abs" style="left:1776.3px;top:380px;width:3px;height:3px;border-radius:50%;background:#111"></div>
<div class="abs" style="left:1783.3px;top:380px;width:3px;height:3px;border-radius:50%;background:#111"></div>
<svg style="left:1085.4px;top:421px" width="18" height="19" viewBox="0 0 18 19" fill="none" stroke="#555" stroke-width="1.400"><path d="M1.200 .700V18.300"/><path d="M1.200 1.600H9.300V11.600H1.200"/><path d="M9.300 3.400H16.300V12.600H9.300"/></svg>
<span class="t" id="cT00" style="left:1105.6px;top:424px;font-size:12.500px;color:#666;letter-spacing:0.52px">8:00 AM</span>
<svg style="left:1192px;top:421px" width="17" height="18" viewBox="0 0 17 18" fill="none" stroke="#555" stroke-width="1.300"><defs><pattern id="ck0" x="1.600" y="1" width="5.200" height="5.200" patternUnits="userSpaceOnUse"><rect width="2.600" height="2.600" fill="#5a5a5a"/><rect x="2.600" y="2.600" width="2.600" height="2.600" fill="#5a5a5a"/></pattern></defs><path d="M1 .500V17.500"/><rect x="1.600" y="1" width="14.600" height="10.400" fill="url(#ck0)" stroke="#555" stroke-width=".900"/></svg>
<span class="t" id="cT01" style="left:1211.8px;top:424px;font-size:12.500px;color:#666;letter-spacing:-0.13px">10:32 AM</span>
<svg style="left:1296px;top:422px" width="24" height="16" viewBox="0 0 24 16" fill="none" stroke="#555" stroke-width="1.400" stroke-linejoin="miter"><path d="M5.300 1.200H18.700L22.800 14.800H1.200Z"/><path d="M12 1.500V5M12 7V10.500M12 12.300V14.800" stroke-width="1.300"/></svg>
<span class="t" id="cT02" style="left:1324.5px;top:424px;font-size:12.500px;color:#666;letter-spacing:0.22px">5.93 km</span>
<svg style="left:1427px;top:420px" width="15" height="20" viewBox="0 0 15 20" fill="none" stroke="#555" stroke-width="1.400"><path d="M7.500 1C3.800 1 1.200 3.700 1.200 7.100C1.200 11.500 7.500 18.800 7.500 18.800C7.500 18.800 13.800 11.500 13.800 7.100C13.800 3.700 11.200 1 7.500 1Z"/><circle cx="7.500" cy="6.800" r="1.400" fill="#555" stroke="none"/></svg>
<span class="t" id="cT03" style="left:1451.4px;top:424px;font-size:12.500px;color:#666;letter-spacing:1.15px">6</span>
<svg style="left:1518px;top:422px" width="20" height="16" viewBox="0 0 20 16" fill="none" stroke="#555" stroke-width="1.400" stroke-linejoin="round"><path d="M3.200 6.200L4.800 1.200H15.200L16.800 6.200"/><path d="M2 6.200H18V13H2Z"/><path d="M2 13V15H5V13M15 13V15H18V13M.500 5.200H3M17 5.200H19.500"/><path d="M4.200 9H6.500M13.500 9H15.800M7.200 11.800C8.500 10.800 11.500 10.800 12.800 11.800" stroke-width="1.200"/></svg>
<span class="t" id="cT04" style="left:1544.7px;top:424px;font-size:12.500px;color:#666;letter-spacing:0.29px">12min</span>
<svg style="left:1630.4px;top:422px" width="16" height="17" viewBox="0 0 16 17" fill="none" stroke="#555" stroke-width="1.400" stroke-linecap="round"><circle cx="8" cy="5.500" r="4.500"/><path d="M1 16C1.300 13 3 11 5.500 10.200L8 12.500L10.500 10.200C13 11 14.700 13 15 16"/></svg>
<span class="t" id="cT05" style="left:1654.6px;top:424px;font-size:12.500px;color:#666;letter-spacing:0.62px">2h20</span>
<svg style="left:1733.6px;top:420px" width="20" height="20" viewBox="0 0 20 20" fill="none" stroke="#555" stroke-width="1.300" stroke-linecap="round" stroke-linejoin="round"><circle cx="10" cy="10" r="9.200"/><path d="M10 5V14.500M6.300 11L10 14.700L13.700 11"/></svg>
<span class="t" id="cT06" style="left:1760.1px;top:424px;font-size:12.500px;color:#666;letter-spacing:0.56px">€5.34</span>
<div class="abs" style="left:1064px;top:466px;width:753px;height:96px;border:1px solid #dcdcdc;border-radius:2px;background:#fff"></div>
<div class="abs" style="left:1065px;top:467px;width:751px;height:43px;background:#f0f0f0"></div>
<div class="abs" style="left:1076px;top:477px;width:21px;height:21px;border-radius:2px;background:#4a90e2"></div><svg style="left:1079px;top:482px" width="15" height="12" viewBox="0 0 15 12" fill="none" stroke="#fff" stroke-width="2.300"><path d="M1.300 6L5.500 10L13.700 1.500"/></svg>
<div class="abs" style="left:1108px;top:476px;width:24px;height:24px;border-radius:50%;background:#a57bea;border:1.500px solid #1a1a1a"></div>
<span class="t" id="cN1" style="left:1141px;top:481px;font-size:15px;color:#222;letter-spacing:0.50px">Julia Virmond | v1</span>
<div class="abs" style="left:1632px;top:476px;width:98px;height:22px;border-radius:2px;background:#f4eddc"></div>
<span class="t" id="cB1" style="left:1639px;top:483px;font-size:11.500px;font-weight:bold;color:#f2cb58;letter-spacing:0.38px">NOT STARTED</span>
<div class="abs" style="left:1769.3px;top:486px;width:3px;height:3px;border-radius:50%;background:#111"></div>
<div class="abs" style="left:1776.3px;top:486px;width:3px;height:3px;border-radius:50%;background:#111"></div>
<div class="abs" style="left:1783.3px;top:486px;width:3px;height:3px;border-radius:50%;background:#111"></div>
<svg style="left:1085.4px;top:527px" width="18" height="19" viewBox="0 0 18 19" fill="none" stroke="#555" stroke-width="1.400"><path d="M1.200 .700V18.300"/><path d="M1.200 1.600H9.300V11.600H1.200"/><path d="M9.300 3.400H16.300V12.600H9.300"/></svg>
<span class="t" id="cT10" style="left:1105.6px;top:530px;font-size:12.500px;color:#666;letter-spacing:0.52px">8:00 AM</span>
<svg style="left:1193px;top:527px" width="17" height="18" viewBox="0 0 17 18" fill="none" stroke="#555" stroke-width="1.300"><defs><pattern id="ck1" x="1.600" y="1" width="5.200" height="5.200" patternUnits="userSpaceOnUse"><rect width="2.600" height="2.600" fill="#5a5a5a"/><rect x="2.600" y="2.600" width="2.600" height="2.600" fill="#5a5a5a"/></pattern></defs><path d="M1 .500V17.500"/><rect x="1.600" y="1" width="14.600" height="10.400" fill="url(#ck1)" stroke="#555" stroke-width=".900"/></svg>
<span class="t" id="cT11" style="left:1214.1px;top:530px;font-size:12.500px;color:#666;letter-spacing:0.26px">4:58 PM</span>
<svg style="left:1297px;top:528px" width="24" height="16" viewBox="0 0 24 16" fill="none" stroke="#555" stroke-width="1.400" stroke-linejoin="miter"><path d="M5.300 1.200H18.700L22.800 14.800H1.200Z"/><path d="M12 1.500V5M12 7V10.500M12 12.300V14.800" stroke-width="1.300"/></svg>
<span class="t" id="cT12" style="left:1325.6px;top:530px;font-size:12.500px;color:#666;letter-spacing:0.05px">8.71 km</span>
<svg style="left:1423px;top:526px" width="15" height="20" viewBox="0 0 15 20" fill="none" stroke="#555" stroke-width="1.400"><path d="M7.500 1C3.800 1 1.200 3.700 1.200 7.100C1.200 11.500 7.500 18.800 7.500 18.800C7.500 18.800 13.800 11.500 13.800 7.100C13.800 3.700 11.200 1 7.500 1Z"/><circle cx="7.500" cy="6.800" r="1.400" fill="#555" stroke="none"/></svg>
<span class="t" id="cT13" style="left:1447.2px;top:530px;font-size:12.500px;color:#666;letter-spacing:0.75px">25</span>
<svg style="left:1517.9px;top:528px" width="20" height="16" viewBox="0 0 20 16" fill="none" stroke="#555" stroke-width="1.400" stroke-linejoin="round"><path d="M3.200 6.200L4.800 1.200H15.200L16.800 6.200"/><path d="M2 6.200H18V13H2Z"/><path d="M2 13V15H5V13M15 13V15H18V13M.500 5.200H3M17 5.200H19.500"/><path d="M4.200 9H6.500M13.500 9H15.800M7.200 11.800C8.500 10.800 11.500 10.800 12.800 11.800" stroke-width="1.200"/></svg>
<span class="t" id="cT14" style="left:1544.3px;top:530px;font-size:12.500px;color:#666;letter-spacing:0.51px">18min</span>
<svg style="left:1629.4px;top:528px" width="16" height="17" viewBox="0 0 16 17" fill="none" stroke="#555" stroke-width="1.400" stroke-linecap="round"><circle cx="8" cy="5.500" r="4.500"/><path d="M1 16C1.300 13 3 11 5.500 10.200L8 12.500L10.500 10.200C13 11 14.700 13 15 16"/></svg>
<span class="t" id="cT15" style="left:1654.4px;top:530px;font-size:12.500px;color:#666;letter-spacing:0.75px">8h20</span>
<svg style="left:1727.6px;top:526px" width="20" height="20" viewBox="0 0 20 20" fill="none" stroke="#555" stroke-width="1.300" stroke-linecap="round" stroke-linejoin="round"><circle cx="10" cy="10" r="9.200"/><path d="M10 5V14.500M6.300 11L10 14.700L13.700 11"/></svg>
<span class="t" id="cT16" style="left:1754.4px;top:530px;font-size:12.500px;color:#666;letter-spacing:0.07px">€569.01</span>
<div class="abs" style="left:1064px;top:572px;width:753px;height:96px;border:1px solid #dcdcdc;border-radius:2px;background:#fff"></div>
<div class="abs" style="left:1065px;top:573px;width:751px;height:43px;background:#f0f0f0"></div>
<div class="abs" style="left:1076px;top:583px;width:21px;height:21px;border-radius:2px;background:#4a90e2"></div><svg style="left:1079px;top:588px" width="15" height="12" viewBox="0 0 15 12" fill="none" stroke="#fff" stroke-width="2.300"><path d="M1.300 6L5.500 10L13.700 1.500"/></svg>
<div class="abs" style="left:1108px;top:582px;width:24px;height:24px;border-radius:50%;background:#52b795;border:1.500px solid #1a1a1a"></div>
<span class="t" id="cN2" style="left:1141px;top:587px;font-size:15px;color:#222;letter-spacing:0.47px">Pauline Henry | v5</span>
<div class="abs" style="left:1632px;top:582px;width:98px;height:22px;border-radius:2px;background:#f4eddc"></div>
<span class="t" id="cB2" style="left:1639px;top:589px;font-size:11.500px;font-weight:bold;color:#f2cb58;letter-spacing:0.38px">NOT STARTED</span>
<div class="abs" style="left:1769.3px;top:592px;width:3px;height:3px;border-radius:50%;background:#111"></div>
<div class="abs" style="left:1776.3px;top:592px;width:3px;height:3px;border-radius:50%;background:#111"></div>
<div class="abs" style="left:1783.3px;top:592px;width:3px;height:3px;border-radius:50%;background:#111"></div>
<svg style="left:1085.4px;top:633px" width="18" height="19" viewBox="0 0 18 19" fill="none" stroke="#555" stroke-width="1.400"><path d="M1.200 .700V18.300"/><path d="M1.200 1.600H9.300V11.600H1.200"/><path d="M9.300 3.400H16.300V12.600H9.300"/></svg>
<span class="t" id="cT20" style="left:1105.6px;top:636px;font-size:12.500px;color:#666;letter-spacing:0.52px">8:00 AM</span>
<svg style="left:1193.9px;top:633px" width="17" height="18" viewBox="0 0 17 18" fill="none" stroke="#555" stroke-width="1.300"><defs><pattern id="ck2" x="1.600" y="1" width="5.200" height="5.200" patternUnits="userSpaceOnUse"><rect width="2.600" height="2.600" fill="#5a5a5a"/><rect x="2.600" y="2.600" width="2.600" height="2.600" fill="#5a5a5a"/></pattern></defs><path d="M1 .500V17.500"/><rect x="1.600" y="1" width="14.600" height="10.400" fill="url(#ck2)" stroke="#555" stroke-width=".900"/></svg>
<span class="t" id="cT21" style="left:1215.0px;top:636px;font-size:12.500px;color:#666;letter-spacing:0.02px">4:52 PM</span>
<svg style="left:1299.2px;top:634px" width="24" height="16" viewBox="0 0 24 16" fill="none" stroke="#555" stroke-width="1.400" stroke-linejoin="miter"><path d="M5.300 1.200H18.700L22.800 14.800H1.200Z"/><path d="M12 1.500V5M12 7V10.500M12 12.300V14.800" stroke-width="1.300"/></svg>
<span class="t" id="cT22" style="left:1327.6px;top:636px;font-size:12.500px;color:#666;letter-spacing:0.33px">5.9 km</span>
<svg style="left:1423px;top:632px" width="15" height="20" viewBox="0 0 15 20" fill="none" stroke="#555" stroke-width="1.400"><path d="M7.500 1C3.800 1 1.200 3.700 1.200 7.100C1.200 11.500 7.500 18.800 7.500 18.800C7.500 18.800 13.800 11.500 13.800 7.100C13.800 3.700 11.200 1 7.500 1Z"/><circle cx="7.500" cy="6.800" r="1.400" fill="#555" stroke="none"/></svg>
<span class="t" id="cT23" style="left:1447.2px;top:636px;font-size:12.500px;color:#666;letter-spacing:0.75px">26</span>
<svg style="left:1517.9px;top:634px" width="20" height="16" viewBox="0 0 20 16" fill="none" stroke="#555" stroke-width="1.400" stroke-linejoin="round"><path d="M3.200 6.200L4.800 1.200H15.200L16.800 6.200"/><path d="M2 6.200H18V13H2Z"/><path d="M2 13V15H5V13M15 13V15H18V13M.500 5.200H3M17 5.200H19.500"/><path d="M4.200 9H6.500M13.500 9H15.800M7.200 11.800C8.500 10.800 11.500 10.800 12.800 11.800" stroke-width="1.200"/></svg>
<span class="t" id="cT24" style="left:1544.3px;top:636px;font-size:12.500px;color:#666;letter-spacing:0.41px">12min</span>
<svg style="left:1629.4px;top:634px" width="16" height="17" viewBox="0 0 16 17" fill="none" stroke="#555" stroke-width="1.400" stroke-linecap="round"><circle cx="8" cy="5.500" r="4.500"/><path d="M1 16C1.300 13 3 11 5.500 10.200L8 12.500L10.500 10.200C13 11 14.700 13 15 16"/></svg>
<span class="t" id="cT25" style="left:1653.9px;top:636px;font-size:12.500px;color:#666;letter-spacing:1.10px">8h40</span>
<svg style="left:1734.2px;top:632px" width="20" height="20" viewBox="0 0 20 20" fill="none" stroke="#555" stroke-width="1.300" stroke-linecap="round" stroke-linejoin="round"><circle cx="10" cy="10" r="9.200"/><path d="M10 5V14.500M6.300 11L10 14.700L13.700 11"/></svg>
<span class="t" id="cT26" style="left:1761.1px;top:636px;font-size:12.500px;color:#666;letter-spacing:0.10px">€5.31</span>
<div class="abs" style="left:1064px;top:678px;width:753px;height:96px;border:1px solid #dcdcdc;border-radius:2px;background:#fff"></div>
<div class="abs" style="left:1065px;top:679px;width:751px;height:43px;background:#f0f0f0"></div>
<div class="abs" style="left:1076px;top:689px;width:21px;height:21px;border-radius:2px;background:#4a90e2"></div><svg style="left:1079px;top:694px" width="15" height="12" viewBox="0 0 15 12" fill="none" stroke="#fff" stroke-width="2.300"><path d="M1.300 6L5.500 10L13.700 1.500"/></svg>
<div class="abs" style="left:1108px;top:688px;width:24px;height:24px;border-radius:50%;background:#4f6fe0;border:1.500px solid #1a1a1a"></div>
<span class="t" id="cN3" style="left:1141px;top:693px;font-size:15px;color:#222;letter-spacing:0.56px">Pierre Dupont | v2</span>
<div class="abs" style="left:1632px;top:688px;width:98px;height:22px;border-radius:2px;background:#f4eddc"></div>
<span class="t" id="cB3" style="left:1639px;top:695px;font-size:11.500px;font-weight:bold;color:#f2cb58;letter-spacing:0.38px">NOT STARTED</span>
<div class="abs" style="left:1769.3px;top:698px;width:3px;height:3px;border-radius:50%;background:#111"></div>
<div class="abs" style="left:1776.3px;top:698px;width:3px;height:3px;border-radius:50%;background:#111"></div>
<div class="abs" style="left:1783.3px;top:698px;width:3px;height:3px;border-radius:50%;background:#111"></div>
<svg style="left:1085.4px;top:739px" width="18" height="19" viewBox="0 0 18 19" fill="none" stroke="#555" stroke-width="1.400"><path d="M1.200 .700V18.300"/><path d="M1.200 1.600H9.300V11.600H1.200"/><path d="M9.300 3.400H16.300V12.600H9.300"/></svg>
<span class="t" id="cT30" style="left:1105.6px;top:742px;font-size:12.500px;color:#666;letter-spacing:0.52px">8:00 AM</span>
<svg style="left:1193px;top:739px" width="17" height="18" viewBox="0 0 17 18" fill="none" stroke="#555" stroke-width="1.300"><defs><pattern id="ck3" x="1.600" y="1" width="5.200" height="5.200" patternUnits="userSpaceOnUse"><rect width="2.600" height="2.600" fill="#5a5a5a"/><rect x="2.600" y="2.600" width="2.600" height="2.600" fill="#5a5a5a"/></pattern></defs><path d="M1 .500V17.500"/><rect x="1.600" y="1" width="14.600" height="10.400" fill="url(#ck3)" stroke="#555" stroke-width=".900"/></svg>
<span class="t" id="cT31" style="left:1213.3px;top:742px;font-size:12.500px;color:#666;letter-spacing:0.38px">5:00 PM</span>
<svg style="left:1296px;top:740px" width="24" height="16" viewBox="0 0 24 16" fill="none" stroke="#555" stroke-width="1.400" stroke-linejoin="miter"><path d="M5.300 1.200H18.700L22.800 14.800H1.200Z"/><path d="M12 1.500V5M12 7V10.500M12 12.300V14.800" stroke-width="1.300"/></svg>
<span class="t" id="cT32" style="left:1324.4px;top:742px;font-size:12.500px;color:#666;letter-spacing:0.22px">9.75 km</span>
<svg style="left:1423px;top:738px" width="15" height="20" viewBox="0 0 15 20" fill="none" stroke="#555" stroke-width="1.400"><path d="M7.500 1C3.800 1 1.200 3.700 1.200 7.100C1.200 11.500 7.500 18.800 7.500 18.800C7.500 18.800 13.800 11.500 13.800 7.100C13.800 3.700 11.200 1 7.500 1Z"/><circle cx="7.500" cy="6.800" r="1.400" fill="#555" stroke="none"/></svg>
<span class="t" id="cT33" style="left:1447.2px;top:742px;font-size:12.500px;color:#666;letter-spacing:0.75px">26</span>
<svg style="left:1516px;top:740px" width="20" height="16" viewBox="0 0 20 16" fill="none" stroke="#555" stroke-width="1.400" stroke-linejoin="round"><path d="M3.200 6.200L4.800 1.200H15.200L16.800 6.200"/><path d="M2 6.200H18V13H2Z"/><path d="M2 13V15H5V13M15 13V15H18V13M.500 5.200H3M17 5.200H19.500"/><path d="M4.200 9H6.500M13.500 9H15.800M7.200 11.800C8.500 10.800 11.500 10.800 12.800 11.800" stroke-width="1.200"/></svg>
<span class="t" id="cT34" style="left:1542.4px;top:742px;font-size:12.500px;color:#666;letter-spacing:1.07px">20min</span>
<svg style="left:1629.4px;top:740px" width="16" height="17" viewBox="0 0 16 17" fill="none" stroke="#555" stroke-width="1.400" stroke-linecap="round"><circle cx="8" cy="5.500" r="4.500"/><path d="M1 16C1.300 13 3 11 5.500 10.200L8 12.500L10.500 10.200C13 11 14.700 13 15 16"/></svg>
<span class="t" id="cT35" style="left:1653.9px;top:742px;font-size:12.500px;color:#666;letter-spacing:1.10px">8h40</span>
<svg style="left:1729px;top:738px" width="20" height="20" viewBox="0 0 20 20" fill="none" stroke="#555" stroke-width="1.300" stroke-linecap="round" stroke-linejoin="round"><circle cx="10" cy="10" r="9.200"/><path d="M10 5V14.500M6.300 11L10 14.700L13.700 11"/></svg>
<span class="t" id="cT36" style="left:1755.8px;top:742px;font-size:12.500px;color:#666;letter-spacing:0.68px">€23.40</span>

<div id="hdr"></div>
<!-- logo -->
<svg style="left:99px;top:94px" width="30" height="30" viewBox="0 0 30 30">
<defs><linearGradient id="lg1" x1="0" y1="0" x2="1" y2="1"><stop offset="0" stop-color="#4f9bf3"/><stop offset=".45" stop-color="#2a3bd6"/><stop offset="1" stop-color="#5a3fe6"/></linearGradient>
<linearGradient id="lg2" x1="0" y1="0" x2="0" y2="1"><stop offset="0" stop-color="#2f55d8"/><stop offset="1" stop-color="#6a49ea"/></linearGradient></defs>
<path d="M14.5 3.6A11 11 0 1 0 14.5 25.6H25.5V14.6A11 11 0 0 0 14.5 3.6Z" fill="none" stroke="url(#lg1)" stroke-width="5.2" stroke-linejoin="miter"/>
<path d="M14.5 3.6A11 11 0 0 1 25.5 14.6V25.6" fill="none" stroke="url(#lg2)" stroke-width="5.2"/>
<path d="M3.5 14.6A11 11 0 0 1 9 5.1" fill="none" stroke="#4f9bf3" stroke-width="5.2"/>
<path d="M19 25.6H25.5" fill="none" stroke="#4a7df0" stroke-width="5.2"/>
</svg>
<span class="t" id="lgA" style="left:134px;top:96.500px;font-size:30.500px;font-weight:bold;color:#1b1b1b;letter-spacing:-0.40px">Ants</span>
<span class="t" id="lgR" style="left:199.300px;top:96.500px;font-size:30.500px;color:#1b1b1b;letter-spacing:-0.56px">Route</span>
<span class="t" id="tSite" style="left:333px;top:103px;font-size:15px;color:#222;letter-spacing:0.36px">Site</span>
<div class="abs" style="left:371px;top:91px;width:157px;height:39px;border:1px solid #d9d9d9;border-radius:4px;background:#fff"></div>
<span class="t" id="tNancy" style="left:390px;top:103px;font-size:15px;color:#333;letter-spacing:0.63px">Nancy</span>
<svg style="left:497px;top:107px" width="13" height="7" viewBox="0 0 13 7"><path d="M0 0H13L6.5 7Z" fill="#555"/></svg>

<!-- nav -->
<svg style="left:707px;top:99.500px" width="21" height="22" viewBox="0 0 21 22" fill="none" stroke="#222" stroke-width="1.600">
<rect x="1.200" y="2.600" width="18.200" height="18" rx=".800"/><path d="M1.200 6.600H19.400" stroke-width="1.500"/><path d="M5.300 .800V4.300M15.300 .800V4.300" stroke-width="1.800"/>
<g stroke="none" fill="#222"><rect x="6.95" y="9.25" width="1.900" height="1.900"/><rect x="10.65" y="9.25" width="1.900" height="1.900"/><rect x="14.35" y="9.25" width="1.900" height="1.900"/><rect x="3.25" y="12.65" width="1.900" height="1.900"/><rect x="6.95" y="12.65" width="1.900" height="1.900"/><rect x="10.65" y="12.65" width="1.900" height="1.900"/><rect x="14.35" y="12.65" width="1.900" height="1.900"/><rect x="3.25" y="16.05" width="1.900" height="1.900"/><rect x="6.95" y="16.05" width="1.900" height="1.900"/><rect x="10.65" y="16.05" width="1.900" height="1.900"/></g></svg>
<span class="t" id="tPlan" style="left:732px;top:103px;font-size:15px;letter-spacing:0.57px">Plan</span>

<div class="abs" style="left:780px;top:92px;width:113px;height:37px;border-radius:5px;background:#f0f6fd"></div>
<svg style="left:792px;top:101px" width="23" height="20" viewBox="0 0 23 20" fill="none" stroke="#5b9ad8" stroke-width="1.7" stroke-linecap="round">
<path d="M3.2 18.5A10.3 10.3 0 1 1 19.8 18.5Z" stroke-linejoin="round"/><path d="M10.8 12.6L16 7.5" stroke-width="2"/><circle cx="10.6" cy="12.8" r="1.4" fill="#5b9ad8"/>
<path d="M4.2 11.5h1.2M6 6.6l.9.9M11.5 4.3v1.2M17.6 11.5h1.2" stroke-width="1.3"/></svg>
<span class="t" id="tOrg" style="left:818px;top:103px;font-size:15px;color:#5b9ad8;letter-spacing:0.60px">Organize</span>

<svg style="left:912px;top:100px" width="22" height="22" viewBox="0 0 22 22" fill="none" stroke="#222" stroke-width="1.8" stroke-linejoin="round">
<path d="M1 3.800H18.300L20.800 7.200L18.300 10.600H1Z"/><path d="M10.300 .800V3.800M10.300 10.600V20.800"/></svg>
<span class="t" id="tMon" style="left:938px;top:103px;font-size:15px;letter-spacing:0.82px">Monitor</span>

<svg style="left:1021px;top:99px" width="24" height="23" viewBox="0 0 24 23" fill="none" stroke="#222" stroke-width="1.8" stroke-linejoin="round">
<path d="M1.500 8.500V21.500H22V2L17.500 5.200C15 7 13.500 4.800 11 5.800C8.500 6.800 7.500 9.200 5.500 8.300C4 7.700 3 8 1.500 8.500Z"/><path d="M1.500 14.800C4 15.200 5 12.500 8 12.200C11 12 12 14.200 15 13.300C18 12.400 19.500 11 22 9.800"/></svg>
<span class="t" id="tAna" style="left:1047px;top:103px;font-size:15px;letter-spacing:0.39px">Analyze</span>

<!-- right nav -->
<svg style="left:1288px;top:101px" width="27" height="20" viewBox="0 0 27 20" fill="none" stroke="#222" stroke-width="1.400" stroke-linecap="round">
<circle cx="9.900" cy="3.700" r="1.900"/><circle cx="17.500" cy="3.700" r="1.900"/>
<circle cx="4.900" cy="9.500" r="2.400"/><circle cx="21.900" cy="9.500" r="2.400"/><circle cx="13.400" cy="12.200" r="2.400"/>
<path d="M1.400 15.200Q2.300 12 4.900 12Q7.500 12 8.400 15.200M18.400 15.200Q19.300 12 21.900 12Q24.500 12 25.400 15.200M9.600 18.800Q10.600 14.700 13.400 14.700Q16.200 14.700 17.200 18.800"/></svg>
<span class="t" id="tCus" style="left:1316px;top:103px;font-size:15px;letter-spacing:0.64px">Customers</span>

<svg style="left:1423px;top:100px" width="26" height="26" viewBox="0 0 26 26" fill="none" stroke="#222" stroke-width="1.600" stroke-linecap="round">
<circle cx="9.900" cy="7.400" r="5.300"/><path d="M1.900 20.400C2.500 16.500 5 13.800 7.600 12.900"/>
<g transform="translate(18 18.600)"><path d="M-0.70 -3.53L-0.75 -5.55L0.75 -5.55L0.70 -3.53L2.00 -2.99L3.40 -4.45L4.45 -3.40L2.99 -2.00L3.53 -0.70L5.55 -0.75L5.55 0.75L3.53 0.70L2.99 2.00L4.45 3.40L3.40 4.45L2.00 2.99L0.70 3.53L0.75 5.55L-0.75 5.55L-0.70 3.53L-2.00 2.99L-3.40 4.45L-4.45 3.40L-2.99 2.00L-3.53 0.70L-5.55 0.75L-5.55 -0.75L-3.53 -0.70L-2.99 -2.00L-4.45 -3.40L-3.40 -4.45L-2.00 -2.99Z" fill="#222" stroke="none"/><circle r="2.100" fill="#fff" stroke="none"/><circle r=".700" fill="#222" stroke="none"/></g></svg>
<span class="t" id="tRes" style="left:1448px;top:103px;font-size:15px;letter-spacing:0.21px">Resources</span>

<svg style="left:1547.600px;top:97.500px" width="26" height="26" viewBox="-13 -13 26 26" fill="none" stroke="#222" stroke-width="1.700" stroke-linejoin="round">
<circle r="3.700"/><path d="M-2.40 -7.95L-2.10 -11.00L2.10 -11.00L2.40 -7.95L5.68 -6.05L8.48 -7.32L10.58 -3.68L8.08 -1.90L8.08 1.90L10.58 3.68L8.48 7.32L5.68 6.05L2.40 7.95L2.10 11.00L-2.10 11.00L-2.40 7.95L-5.68 6.05L-8.48 7.32L-10.58 3.68L-8.08 1.90L-8.08 -1.90L-10.58 -3.68L-8.48 -7.32L-5.68 -6.05Z"/></svg>
<span class="t" id="tSet" style="left:1575px;top:103px;font-size:15px;letter-spacing:0.76px">Settings</span>

<svg style="left:1664px;top:99px" width="26" height="25" viewBox="0 0 26 25" fill="none" stroke="#222" stroke-width="1.800" stroke-linecap="round">
<circle cx="14.900" cy="10.800" r="8"/><path d="M8.800 16.800L2 23"/></svg>

<svg style="left:1719px;top:99px" width="20" height="26" viewBox="0 0 20 26" fill="none" stroke="#222" stroke-width="1.700" stroke-linejoin="round" stroke-linecap="round">
<path d="M1.800 20.300H18.200M3.800 20.300V10C3.800 5.500 6.400 2.500 10 2.500C13.600 2.500 16.200 5.500 16.200 10V20.300"/><circle cx="10" cy="22.300" r="1.700" stroke-width="1.400"/><path d="M10 1V2.500"/></svg>
<div class="abs" style="left:1729.500px;top:84.200px;width:27px;height:27px;border-radius:50%;background:#2f6ab1"></div>
<span class="t" id="t46" style="left:1734px;top:91px;font-size:13px;font-weight:bold;color:#fff;letter-spacing:1.200px">46</span>
<div class="abs" style="left:1761px;top:86px;width:48px;height:48px;border-radius:50%;background:#4a98e9;box-shadow:0 4px 9px rgba(40,90,160,.4)"></div>
<span class="t" id="tMH" style="left:1772px;top:103px;font-size:15px;font-weight:bold;color:#fff">MH</span>

</body>
</html>
